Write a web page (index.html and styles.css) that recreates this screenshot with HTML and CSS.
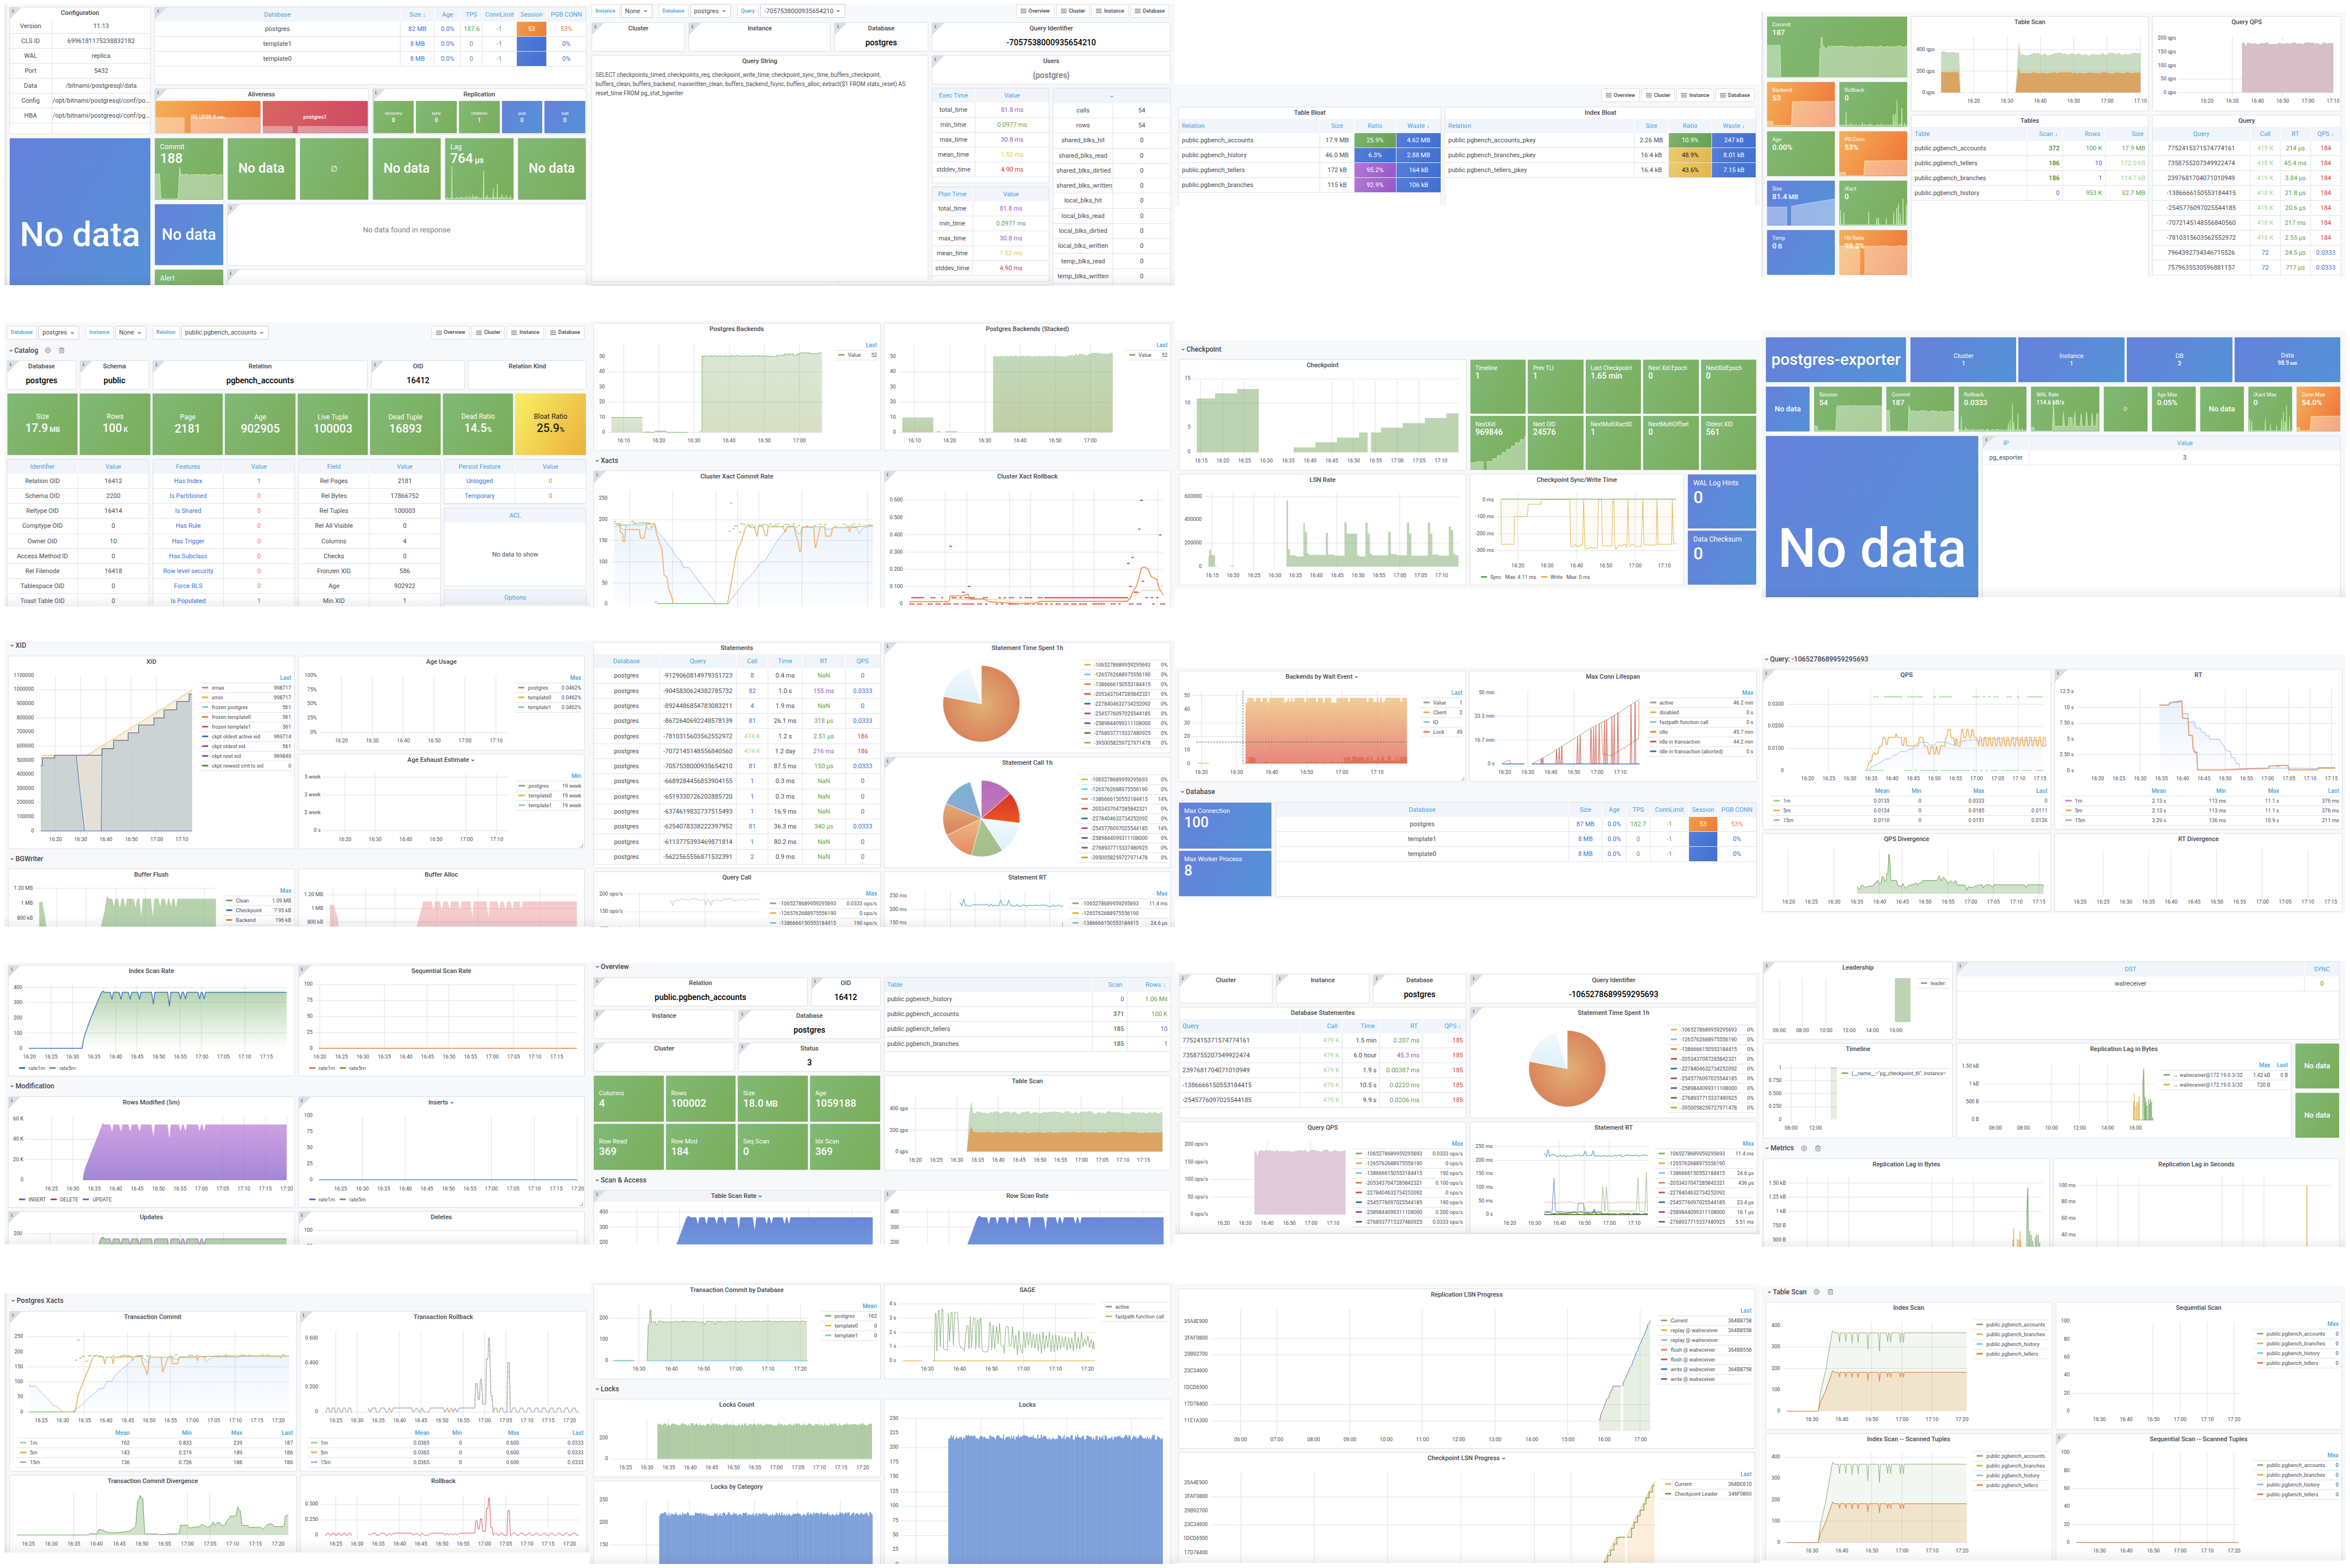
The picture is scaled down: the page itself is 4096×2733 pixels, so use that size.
FILE: index.html
```html
<!DOCTYPE html>
<html lang="en">
<head>
<meta charset="utf-8">
<title>PostgreSQL dashboards</title>
<link rel="stylesheet" href="styles.css">
</head>
<body>
<svg class="defs" aria-hidden="true">
<symbol id="chev" viewBox="0 0 10 10"><path d="M2 3.5 5 6.5 8 3.5" fill="none" stroke="currentColor" stroke-width="1.5"/></symbol>
<symbol id="menu" viewBox="0 0 10 10"><path d="M0 2H10M0 5H10M0 8H10" fill="none" stroke="currentColor" stroke-width="1.1"/></symbol>
<symbol id="gear" viewBox="0 0 16 16"><path d="M6.6 1.5h2.8l.5 1.9 1.8-1 2 2-1 1.8 1.8.5v2.6l-1.8.5 1 1.8-2 2-1.8-1-.5 1.9H6.6l-.5-1.9-1.8 1-2-2 1-1.8-1.8-.5V6.7l1.8-.5-1-1.8 2-2 1.8 1z" fill="none" stroke="currentColor" stroke-width="1.3"/><circle cx="8" cy="8" r="2.3" fill="none" stroke="currentColor" stroke-width="1.3"/></symbol>
<symbol id="trash" viewBox="0 0 16 16"><path d="M1.5 4H14.5M5.5 4V1.7H10.5V4M3 4V14.5H13V4M6.5 7V11.5M9.5 7V11.5" fill="none" stroke="currentColor" stroke-width="1.4"/></symbol>
</svg>
<main class="wall">

<section class="shot s11 shade edge"><div class="dash">
<div class="panel w6 h8"><i class="info"></i><h3>Configuration</h3><table class="ct conf"><col class="p30"><col><tr><td>Version<td>11.13<tr><td>CLS ID<td>6996181175238832182<tr><td>WAL<td>replica<tr><td>Port<td>5432<tr><td>Data<td>/bitnami/postgresql/data<tr><td>Config<td>/opt/bitnami/postgresql/conf/po…<tr><td>HBA<td>/opt/bitnami/postgresql/conf/pg…<tr><td>&nbsp;<td>&nbsp;</table></div>
<div class="panel w18 h5"><i class="info"></i><table class="ct"><col class="p57"><col class="p8"><col class="p6"><col class="p5"><col class="p8"><col class="p7"><col class="p9"><tr><th>Database<th>Size ↓<th>Age<th>TPS<th>ConnLimit<th>Session<th>PGB CONN<tr><td>postgres<td class="b">82 MB<td class="b">0.0%<td class="g">187.6<td class="g">-1<td class="co">53<td class="o">53%<tr><td>template1<td class="b">8 MB<td class="b">0.0%<td class="g">0<td class="g">-1<td class="cb"><td class="b">0%<tr><td>template0<td class="b">8 MB<td class="b">0.0%<td class="g">0<td class="g">-1<td class="cb"><td class="b">0%</table></div>
<div class="panel col w9 h3"><i class="info"></i><h3>Aliveness</h3><div class="stats c2"><div class="stat orange mid t9"><svg class="chart" data-chart="al1"></svg><p class="line">PG UP<b>39.6<small> min</small></b></p></div><div class="stat red mid t9"><svg class="chart" data-chart="al2"></svg><p class="line"><b>postgres1</b></p></div></div></div>
<div class="panel col w9 h3"><i class="info"></i><h3>Replication</h3><div class="stats c5"><div class="stat green mid t8"><p>recovery<b>0</b></p></div><div class="stat green mid t8"><p>sync<b>0</b></p></div><div class="stat green mid t8"><p>children<b>1</b></p></div><div class="stat blue mid t8"><p>pub<b>0</b></p></div><div class="stat blue mid t8"><p>sub<b>0</b></p></div></div></div>
<div class="stat blue mid n60 w6 h12"><p><b>No data</b></p></div>
<div class="stat green t12 w3 h4"><svg class="chart" data-chart="cm11"></svg><p>Commit<b>188</b></p></div>
<div class="stat green mid n23 w3 h4"><p><b>No data</b></p></div>
<div class="stat green mid n23 w3 h4"><p><span class="nil">∅</span></p></div>
<div class="stat green mid n23 w3 h4"><p><b>No data</b></p></div>
<div class="stat green t12 w3 h4"><svg class="chart" data-chart="lg11"></svg><p>Lag<b>764<small> µs</small></b></p></div>
<div class="stat green mid n23 w3 h4"><p><b>No data</b></p></div>
<div class="stat blue mid n27 w3 h4"><p><b>No data</b></p></div>
<div class="panel w15 h4"><i class="info"></i><p class="empty">No data found in response</p></div>
<div class="stat green t12 w3 h4"><p>Alert</p></div>
<div class="panel w15 h4"><i class="info"></i></div>
</div></section>

<section class="shot s12 shade">
<nav class="bar"><label for="i12">Instance</label><select id="i12"><option>None</option></select><label for="d12">Database</label><select id="d12"><option>postgres</option></select><label for="q12">Query</label><select id="q12"><option>-7057538000935654210</option></select><span class="push"></span><a href="#"><svg><use href="#menu"/></svg>Overview</a><a href="#"><svg><use href="#menu"/></svg>Cluster</a><a href="#"><svg><use href="#menu"/></svg>Instance</a><a href="#"><svg><use href="#menu"/></svg>Database</a></nav>
<div class="dash">
<div class="panel w4 h2"><i class="info"></i><h3>Cluster</h3></div>
<div class="panel w6 h2"><i class="info"></i><h3>Instance</h3></div>
<div class="panel w4 h2"><i class="info"></i><h3>Database</h3><p class="val">postgres</p></div>
<div class="panel w10 h2"><i class="info"></i><h3>Query Identifier</h3><p class="val">-7057538000935654210</p></div>
<div class="panel w14 h14"><h3>Query String</h3><p class="sql">SELECT checkpoints_timed, checkpoints_req, checkpoint_write_time, checkpoint_sync_time, buffers_checkpoint,<br>buffers_clean, buffers_backend, maxwritten_clean, buffers_backend_fsync, buffers_alloc, extract($1 FROM stats_reset) AS<br>reset_time FROM pg_stat_bgwriter</p></div>
<div class="panel w10 h2"><i class="info"></i><h3>Users</h3><p class="val dim">{postgres}</p></div>
<div class="panel w5 h6"><table class="ct"><col class="p37"><col><tr><th>Exec Time<th>Value<tr><td>total_time<td class="p">81.8 ms<tr><td>min_time<td class="g">0.0977 ms<tr><td>max_time<td class="p">30.8 ms<tr><td>mean_time<td class="y">1.52 ms<tr><td>stddev_time<td class="r">4.90 ms</table></div>
<div class="panel w5 h14"><table class="ct rows14"><col class="p51"><col><tr><th colspan="2"><svg class="ic"><use href="#chev"/></svg><tr><td>calls<td>54<tr><td>rows<td>54<tr><td>shared_blks_hit<td>0<tr><td>shared_blks_read<td>0<tr><td>shared_blks_dirtied<td>0<tr><td>shared_blks_written<td>0<tr><td>local_blks_hit<td>0<tr><td>local_blks_read<td>0<tr><td>local_blks_dirtied<td>0<tr><td>local_blks_written<td>0<tr><td>temp_blks_read<td>0<tr><td>temp_blks_written<td>0<tr><td>&nbsp;<td>&nbsp;</table></div>
<div class="panel w5 h6"><table class="ct"><col class="p35"><col><tr><th>Plan Time<th>Value<tr><td>total_time<td class="p">81.8 ms<tr><td>min_time<td class="g">0.0977 ms<tr><td>max_time<td class="p">30.8 ms<tr><td>mean_time<td class="y">1.52 ms<tr><td>stddev_time<td class="r">4.90 ms</table></div>
<div class="panel w10 h4"><i class="info"></i></div><div class="panel w9 h4"><i class="info"></i></div>
</div></section>

<section class="shot s13">
<nav class="bar"><span class="push"></span><a href="#"><svg><use href="#menu"/></svg>Overview</a><a href="#"><svg><use href="#menu"/></svg>Cluster</a><a href="#"><svg><use href="#menu"/></svg>Instance</a><a href="#"><svg><use href="#menu"/></svg>Database</a></nav>
<div class="dash">
<div class="panel w11 h9"><h3>Table Bloat</h3><table class="rt"><col class="p54"><col class="p13"><col class="p16"><col class="p17"><tr><th>Relation<th class="m">Size<th class="m">Ratio<th class="m">Waste ↓<tr><td>public.pgbench_accounts<td class="m">17.9 MB<td class="m cg">25.9%<td class="m cb">4.62 MB<tr><td>public.pgbench_history<td class="m">46.0 MB<td class="m cb">6.3%<td class="m cb">2.88 MB<tr><td>public.pgbench_tellers<td class="m">172 kB<td class="m cp">95.2%<td class="m cb">164 kB<tr><td>public.pgbench_branches<td class="m">115 kB<td class="m cp">92.9%<td class="m cb">106 kB</table></div>
<div class="panel w13 h9"><h3>Index Bloat</h3><table class="rt"><col class="p61"><col class="p11"><col class="p14"><col class="p14"><tr><th>Relation<th class="m">Size<th class="m">Ratio<th class="m">Waste ↓<tr><td>public.pgbench_accounts_pkey<td class="m">2.26 MB<td class="m cg">10.9%<td class="m cb">247 kB<tr><td>public.pgbench_branches_pkey<td class="m">16.4 kB<td class="m cy">48.9%<td class="m cb">8.01 kB<tr><td>public.pgbench_tellers_pkey<td class="m">16.4 kB<td class="m cy">43.6%<td class="m cb">7.15 kB</table></div>
</div></section>

<section class="shot s14 edge"><div class="dash">
<div class="stat green t9 w6 h4"><svg class="chart" data-chart="cm14"></svg><p>Commit<b>187</b></p></div>
<div class="panel plot w10 h6"><h3>Table Scan</h3><svg class="chart" data-chart="ts14"></svg></div>
<div class="panel plot w8 h6"><h3>Query QPS</h3><svg class="chart" data-chart="qq14"></svg></div>
<div class="stat orange t9 w3 h3"><svg class="chart" data-chart="bk14"></svg><p>Backend<b>53</b></p></div>
<div class="stat green t9 w3 h3"><svg class="chart" data-chart="rb14"></svg><p>Rollback<b>0</b></p></div>
<div class="panel w10 h12"><h3>Tables</h3><table class="rt"><col class="p49"><col class="p15"><col class="p18"><col class="p18"><tr><th>Table<th>Scan ↓<th>Rows<th>Size<tr><td>public.pgbench_accounts<td class="G">372<td class="g">100 K<td class="g">17.9 MB<tr><td>public.pgbench_tellers<td class="G">186<td class="b">10<td class="l">172.0 kB<tr><td>public.pgbench_branches<td class="G">186<td class="b">1<td class="l">114.7 kB<tr><td>public.pgbench_history<td class="b">0<td class="g">953 K<td class="g">52.7 MB</table></div>
<div class="panel w8 h12"><h3>Query</h3><table class="ct"><col class="p52"><col class="p16"><col class="p16"><col class="p16"><tr><th>Query<th>Call<th>RT<th>QPS ↓<tr><td>7752415371574774161<td class="l">419 K<td class="g">214 µs<td class="r">184<tr><td>7358755207349922474<td class="l">418 K<td class="g">45.4 ms<td class="r">184<tr><td>2397681704071010949<td class="l">419 K<td class="g">3.84 µs<td class="r">184<tr><td>-1386666150553184415<td class="l">418 K<td class="g">21.8 µs<td class="r">184<tr><td>-2545776097025544185<td class="l">419 K<td class="g">20.6 µs<td class="r">184<tr><td>-7072145148556840560<td class="l">418 K<td class="g">217 ms<td class="r">184<tr><td>-7810315603562552972<td class="l">418 K<td class="g">2.55 µs<td class="r">184<tr><td>7964392734346715526<td class="b">72<td class="g">24.5 µs<td class="b">0.0333<tr><td>7579635530596881157<td class="b">72<td class="g">717 µs<td class="b">0.0333<tr><td>&nbsp;<td>&nbsp;<td>&nbsp;<td>&nbsp;</table></div>
<div class="stat green t9 w3 h3"><p>Age<b>0.00%</b></p></div>
<div class="stat orange t9 w3 h3"><svg class="chart" data-chart="pc14"></svg><p>PG Conn<b>53%</b></p></div>
<div class="stat blue t9 w3 h3"><svg class="chart" data-chart="sz14"></svg><p>Size<b>81.4<small> MB</small></b></p></div>
<div class="stat green t9 w3 h3"><svg class="chart" data-chart="ix14"></svg><p>iXact<b>0</b></p></div>
<div class="stat blue t9 w3 h3"><p>Temp<b>0<small> B</small></b></p></div>
<div class="stat orange t9 w3 h3"><svg class="chart" data-chart="hr14"></svg><p>Hit Ratio<b>98.2%</b></p></div>
</div></section>

<section class="shot s21 shade">
<nav class="bar"><label for="d21">Database</label><select id="d21"><option>postgres</option></select><label for="i21">Instance</label><select id="i21"><option>None</option></select><label for="r21">Relation</label><select id="r21"><option>public.pgbench_accounts</option></select><span class="push"></span><a href="#"><svg><use href="#menu"/></svg>Overview</a><a href="#"><svg><use href="#menu"/></svg>Cluster</a><a href="#"><svg><use href="#menu"/></svg>Instance</a><a href="#"><svg><use href="#menu"/></svg>Database</a></nav>
<div class="dash">
<h2 class="w24 h1"><button><svg class="ic"><use href="#chev"/></svg>Catalog</button><svg class="tool"><use href="#gear"/></svg><svg class="tool"><use href="#trash"/></svg></h2>
<div class="panel w3 h2"><i class="info"></i><h3>Database</h3><p class="val">postgres</p></div>
<div class="panel w3 h2"><i class="info"></i><h3>Schema</h3><p class="val">public</p></div>
<div class="panel w9 h2"><i class="info"></i><h3>Relation</h3><p class="val">pgbench_accounts</p></div>
<div class="panel w4 h2"><i class="info"></i><h3>OID</h3><p class="val">16412</p></div>
<div class="panel w5 h2"><h3>Relation Kind</h3></div>
<div class="stats c8 w24 h4"><div class="stat green mid t20"><p>Size<b>17.9<small> MB</small></b></p></div><div class="stat green mid t20"><p>Rows<b>100<small> K</small></b></p></div><div class="stat green mid t20"><p>Page<b>2181</b></p></div><div class="stat green mid t20"><p>Age<b>902905</b></p></div><div class="stat green mid t20"><p>Live Tuple<b>100003</b></p></div><div class="stat green mid t20"><p>Dead Tuple<b>16893</b></p></div><div class="stat green mid t20"><p>Dead Ratio<b>14.5<small>%</small></b></p></div><div class="stat yellow mid t20"><p>Bloat Ratio<b>25.9<small>%</small></b></p></div></div>
<div class="panel w6 h12"><table class="ct rows11"><col><col><tr><th>Identifier<th>Value<tr><td>Relation OID<td>16412<tr><td>Schema OID<td>2200<tr><td>Reltype OID<td>16414<tr><td>Comptype OID<td>0<tr><td>Owner OID<td>10<tr><td>Access Method ID<td>0<tr><td>Rel Filenode<td>16418<tr><td>Tablespace OID<td>0<tr><td>Toast Table OID<td>0<tr><td>&nbsp;<td></table></div>
<div class="panel w6 h12"><table class="ct rows11"><col><col><tr><th>Features<th>Value<tr><td class="b">Has Index<td class="g">1<tr><td class="b">Is Partitioned<td class="o">0<tr><td class="b">Is Shared<td class="o">0<tr><td class="b">Has Rule<td class="o">0<tr><td class="b">Has Trigger<td class="o">0<tr><td class="b">Has Subclass<td class="o">0<tr><td class="b">Row level security<td class="o">0<tr><td class="b">Force RLS<td class="o">0<tr><td class="b">Is Populated<td class="g">1<tr><td>&nbsp;<td></table></div>
<div class="panel w6 h12"><table class="ct rows11"><col><col><tr><th>Field<th>Value<tr><td>Rel Pages<td>2181<tr><td>Rel Bytes<td>17866752<tr><td>Rel Tuples<td>100003<tr><td>Rel All Visible<td>0<tr><td>Columns<td>4<tr><td>Checks<td>0<tr><td>Fronzen XID<td>586<tr><td>Age<td>902922<tr><td>Min XID<td>1<tr><td>&nbsp;<td></table></div>
<div class="panel w6 h3"><table class="ct"><col><col><tr><th>Persist Feature<th>Value<tr><td class="b">Unlogged<td class="o">0<tr><td class="b">Temporary<td class="o">0</table></div>
<div class="panel col w6 h5"><table class="ct"><tr><th>ACL</table><p class="empty dark">No data to show</p></div>
<div class="panel w6 h4"><table class="ct"><tr><th>Options</table></div>
</div></section>

<section class="shot s22"><div class="dash">
<div class="panel plot w12 h8"><h3>Postgres Backends</h3><svg class="chart" data-chart="bk1"></svg><table class="legend"><tr><th><th>Last<tr class="k1"><td>Value<td>52</table></div>
<div class="panel plot w12 h8"><h3>Postgres Backends (Stacked)</h3><svg class="chart" data-chart="bk2"></svg><table class="legend"><tr><th><th>Last<tr class="k1"><td>Value<td>52</table></div>
<h2 class="w24 h1"><button><svg class="ic"><use href="#chev"/></svg>Xacts</button></h2>
<div class="panel plot w12 h9"><i class="info"></i><h3>Cluster Xact Commit Rate</h3><svg class="chart" data-chart="cm22"></svg></div>
<div class="panel plot w12 h9"><i class="info"></i><h3>Cluster Xact Rollback</h3><svg class="chart" data-chart="rb22"></svg></div>
</div></section>

<section class="shot s23"><div class="dash">
<h2 class="w24 h1"><button><svg class="ic"><use href="#chev"/></svg>Checkpoint</button></h2>
<div class="panel plot w12 h7"><h3>Checkpoint</h3><svg class="chart" data-chart="ck23"></svg></div>
<div class="stats c5 w12 h7"><div class="stat green t10"><p>Timeline<b>1</b></p></div><div class="stat green t10"><p>Prev TLI<b>1</b></p></div><div class="stat green t10"><p>Last Checkpoint<b>1.65 min</b></p></div><div class="stat green t10"><p>Next Xid Epoch<b>0</b></p></div><div class="stat green t10"><p>NextXidEpoch<b>0</b></p></div><div class="stat green t10"><svg class="chart" data-chart="nx23"></svg><p>NextXid<b>969846</b></p></div><div class="stat green t10"><p>Next OID<b>24576</b></p></div><div class="stat green t10"><p>NextMultiXactID<b>1</b></p></div><div class="stat green t10"><p>NextMultiOffset<b>0</b></p></div><div class="stat green t10"><p>Oldest XID<b>561</b></p></div></div>
<div class="panel plot w12 h7"><h3>LSN Rate</h3><svg class="chart" data-chart="ls23"></svg></div>
<div class="panel plot w9 h7"><h3>Checkpoint Sync/Write Time</h3><svg class="chart" data-chart="sw23"></svg><ul class="keys"><li class="k11">Sync&ensp; Max: 4.11 ms<li class="k2">Write&ensp; Max: 0 ms</ul></div>
<div class="stats c1 w3 h7"><div class="stat blue t30"><p>WAL Log Hints<b>0</b></p></div><div class="stat blue t30"><p>Data Checksum<b>0</b></p></div></div>
</div></section>

<section class="shot s24 shade"><div class="dash">
<div class="stat blue mid n28 w6 h3"><p><b>postgres-exporter</b></p></div>
<div class="stats c4 w18 h3"><div class="stat blue mid t11"><p>Cluster<b>1</b></p></div><div class="stat blue mid t11"><p>Instance<b>1</b></p></div><div class="stat blue mid t11"><p>DB<b>3</b></p></div><div class="stat blue mid t11"><p>Data<b>98.9<small> MB</small></b></p></div></div>
<div class="stat blue mid n13 w2 h3"><p><b>No data</b></p></div>
<div class="stat green t9 w3 h3"><svg class="chart" data-chart="ss24"></svg><p>Session<b>54</b></p></div>
<div class="stat green t9 w3 h3"><svg class="chart" data-chart="cm24"></svg><p>Commit<b>187</b></p></div>
<div class="stat green t9 w3 h3"><svg class="chart" data-chart="rb24"></svg><p>Rollback<b>0.0333</b></p></div>
<div class="stat green t9 w3 h3"><svg class="chart" data-chart="wr24"></svg><p>WAL Rate<b class="sm">114.6 kB/s</b></p></div>
<div class="stat green mid n13 w2 h3"><p><span class="nil">∅</span></p></div>
<div class="stat green t9 w2 h3"><p>Age Max<b>0.05%</b></p></div>
<div class="stat green mid n13 w2 h3"><p><b>No data</b></p></div>
<div class="stat green t9 w2 h3"><svg class="chart" data-chart="ix24"></svg><p>iXact Max<b>0</b></p></div>
<div class="stat orange t9 w2 h3"><svg class="chart" data-chart="cx24"></svg><p>Conn Max<b>54.0%</b></p></div>
<div class="stat blue mid n94 w9 h14"><p><b>No data</b></p></div>
<div class="panel w15 h14"><i class="info"></i><table class="ct"><col class="p13"><col><tr><th>IP<th>Value<tr><td>pg_exporter<td>3</table></div>
</div></section>

<section class="shot s31 shade"><div class="dash">
<h2 class="w24 h1"><button><svg class="ic"><use href="#chev"/></svg>XID</button></h2>
<div class="panel plot w12 h12"><h3>XID</h3><svg class="chart" data-chart="xid"></svg><table class="legend"><tr><th><th>Last<tr class="k1"><td>xmax<td>998717<tr class="k2"><td>xmin<td>998717<tr class="k3"><td>frozen postgres<td>561<tr class="k4"><td>frozen template0<td>561<tr class="k5"><td>frozen template1<td>561<tr class="k6"><td>ckpt oldest active xid<td>969714<tr class="k7"><td>ckpt oldest xid<td>561<tr class="k8"><td>ckpt next xid<td>969846<tr class="k9"><td>ckpt newest cmt ts xid<td>0</table></div>
<div class="panel plot w12 h6"><h3>Age Usage</h3><svg class="chart" data-chart="au31"></svg><table class="legend"><tr><th><th>Max<tr class="k1"><td>postgres<td>0.0462%<tr class="k2"><td>template0<td>0.0462%<tr class="k3"><td>template1<td>0.0462%</table></div>
<div class="panel plot grip w12 h6"><h3>Age Exhaust Estimate <svg class="ic"><use href="#chev"/></svg></h3><svg class="chart" data-chart="ae31"></svg><table class="legend"><tr><th><th>Min<tr class="k1"><td>postgres<td>19 week<tr class="k2"><td>template0<td>19 week<tr class="k3"><td>template1<td>19 week</table></div>
<h2 class="w24 h1"><button><svg class="ic"><use href="#chev"/></svg>BGWriter</button></h2>
<div class="panel plot w12 h7"><h3>Buffer Flush</h3><svg class="chart" data-chart="bf31"></svg><table class="legend"><tr><th><th>Max<tr class="k11"><td>Clean<td>1.09 MB<tr class="k12"><td>Checkpoint<td>7.95 kB<tr class="k13"><td>Backend<td>196 kB<tr><td>&nbsp;<td></table></div>
<div class="panel plot w12 h7"><h3>Buffer Alloc</h3><svg class="chart" data-chart="ba31"></svg></div>
</div></section>

<section class="shot s32 shade"><div class="dash">
<div class="panel w12 h14"><h3>Statements</h3><table class="ct rows14"><col class="p23"><col class="p27"><col class="p11"><col class="p12"><col class="p15"><col class="p12"><tr><th>Database<th>Query<th>Call<th>Time<th>RT<th>QPS<tr><td>postgres<td>-9129060814979351723<td class="b">8<td>0.4 ms<td class="g">NaN<td class="b">0<tr><td>postgres<td>-9045830624382785732<td class="b">82<td>1.0 s<td class="p">155 ms<td class="b">0.0333<tr><td>postgres<td>-8924486854783083211<td class="b">4<td>1.9 ms<td class="g">NaN<td class="b">0<tr><td>postgres<td>-8672640692248578139<td class="b">81<td>26.1 ms<td class="g">318 µs<td class="b">0.0333<tr><td>postgres<td>-7810315603562552972<td class="l">474 K<td>1.2 s<td class="g">2.51 µs<td class="r">186<tr><td>postgres<td>-7072145148556840560<td class="l">474 K<td>1.2 day<td class="p">216 ms<td class="r">186<tr><td>postgres<td>-7057538000935654210<td class="b">81<td>87.5 ms<td class="g">150 µs<td class="b">0.0333<tr><td>postgres<td>-6689284456853904155<td class="b">1<td>0.3 ms<td class="g">NaN<td class="b">0<tr><td>postgres<td>-6519330726202885720<td class="b">1<td>0.3 ms<td class="g">NaN<td class="b">0<tr><td>postgres<td>-6374619832737515493<td class="b">1<td>16.9 ms<td class="g">NaN<td class="b">0<tr><td>postgres<td>-6254078338222397952<td class="b">81<td>36.3 ms<td class="g">340 µs<td class="b">0.0333<tr><td>postgres<td>-6113775393469871814<td class="b">1<td>80.2 ms<td class="g">NaN<td class="b">0<tr><td>postgres<td>-5622565556871532391<td class="b">2<td>0.9 ms<td class="g">NaN<td class="b">0</table></div>
<div class="panel plot w12 h7"><i class="info"></i><h3>Statement Time Spent 1h</h3><svg class="chart" data-chart="pie1"></svg><table class="legend"><tr class="k2"><td>-1065278689959295693<td>0%<tr class="k3"><td>-1265762688975556190<td>0%<tr class="k4"><td>-1386666150553184415<td>0%<tr class="k5"><td>-2053437047285842321<td>0%<tr class="k6"><td>-2278404632734252092<td>0%<tr class="k7"><td>-2545776097025544185<td>0%<tr class="k8"><td>-2589844099311108000<td>0%<tr class="k9"><td>-2768937715337480925<td>0%<tr class="k10"><td>-3950058259727971478<td>0%</table></div>
<div class="panel plot w12 h7"><i class="info"></i><h3>Statement Call 1h</h3><svg class="chart" data-chart="pie2"></svg><table class="legend"><tr class="k2"><td>-1065278689959295693<td>0%<tr class="k3"><td>-1265762688975556190<td>0%<tr class="k4"><td>-1386666150553184415<td>14%<tr class="k5"><td>-2053437047285842321<td>0%<tr class="k6"><td>-2278404632734252092<td>0%<tr class="k7"><td>-2545776097025544185<td>14%<tr class="k8"><td>-2589844099311108000<td>0%<tr class="k9"><td>-2768937715337480925<td>0%<tr class="k10"><td>-3950058259727971478<td>0%</table></div>
<div class="panel plot w12 h7"><h3>Query Call</h3><svg class="chart" data-chart="qc32"></svg><table class="legend"><tr><th><th>Max<tr class="k1"><td>-1065278689959295693<td>0.0333 ops/s<tr class="k2"><td>-1265762688975556190<td>0 ops/s<tr class="k3"><td>-1386666150553184415<td>190 ops/s<tr class="k4"><td>&nbsp;<td></table></div>
<div class="panel plot w12 h7"><h3>Statement RT</h3><svg class="chart" data-chart="rt32"></svg><table class="legend"><tr><th><th>Max<tr class="k1"><td>-1065278689959295693<td>11.4 ms<tr class="k2"><td>-1265762688975556190<td><tr class="k3"><td>-1386666150553184415<td>24.6 µs<tr class="k4"><td>&nbsp;<td></table></div>
</div></section>

<section class="shot s33"><div class="dash">
<div class="panel plot grip w12 h7"><h3>Backends by Wait Event <svg class="ic"><use href="#chev"/></svg></h3><svg class="chart" data-chart="bw33"></svg><table class="legend"><tr><th><th>Last<tr class="k1"><td>Value<td>1<tr class="k2"><td>Client<td>2<tr class="k3"><td>IO<td><tr class="k4"><td>Lock<td>49</table></div>
<div class="panel plot w12 h7"><h3>Max Conn Lifespan</h3><svg class="chart" data-chart="ml33"></svg><table class="legend"><tr><th><th>Max<tr class="k1"><td>active<td>46.2 min<tr class="k2"><td>disabled<td>0 s<tr class="k3"><td>fastpath function call<td>0 s<tr class="k4"><td>idle<td>45.7 min<tr class="k5"><td>idle in transaction<td>44.2 min<tr class="k6"><td>idle in transaction (aborted)<td>0 s</table></div>
<h2 class="w24 h1"><button><svg class="ic"><use href="#chev"/></svg>Database</button></h2>
<div class="stats c1 w4 h6"><div class="stat blue t25"><p>Max Connection<b>100</b></p></div><div class="stat blue t25"><p>Max Worker Process<b>8</b></p></div></div>
<div class="panel w20 h6"><table class="ct"><col class="p61"><col class="p7"><col class="p5"><col class="p5"><col class="p8"><col class="p6"><col class="p8"><tr><th>Database<th>Size<th>Age<th>TPS<th>ConnLimit<th>Session<th>PGB CONN<tr><td>postgres<td class="b">87 MB<td class="b">0.0%<td class="g">182.7<td class="g">-1<td class="co">53<td class="o">53%<tr><td>template1<td class="b">8 MB<td class="b">0.0%<td class="g">0<td class="g">-1<td class="cb"><td class="b">0%<tr><td>template0<td class="b">8 MB<td class="b">0.0%<td class="g">0<td class="g">-1<td class="cb"><td class="b">0%</table></div>
</div></section>

<section class="shot s34"><div class="dash">
<h2 class="w24 h1"><button><svg class="ic"><use href="#chev"/></svg>Query: -1065278689959295693</button></h2>
<div class="panel plot w12 h10"><i class="info"></i><h3>QPS</h3><svg class="chart" data-chart="qp34"></svg><table class="legend wide"><tr><th><th>Mean<th>Min<th>Max<th>Last<tr class="k14"><td>1m<td>0.0135<td>0<td>0.0333<td>0<tr class="k15"><td>5m<td>0.0124<td>0<td>0.0185<td>0.0111<tr class="k16"><td>15m<td>0.0110<td>0<td>0.0151<td>0.0126</table></div>
<div class="panel plot w12 h10"><i class="info"></i><h3>RT</h3><svg class="chart" data-chart="rt34"></svg><table class="legend wide"><tr><th><th>Mean<th>Min<th>Max<th>Last<tr class="k17"><td>1m<td>2.13 s<td>113 ms<td>11.1 s<td>376 ms<tr class="k15"><td>5m<td>2.13 s<td>113 ms<td>11.1 s<td>376 ms<tr class="k16"><td>15m<td>3.29 s<td>136 ms<td>10.9 s<td>211 ms</table></div>
<div class="panel plot w12 h5"><h3>QPS Divergence</h3><svg class="chart" data-chart="qd34"></svg></div>
<div class="panel plot w12 h5"><h3>RT Divergence</h3><svg class="chart" data-chart="rd34"></svg></div>
</div></section>

<section class="shot s41 shade"><div class="dash">
<div class="panel plot w12 h7"><i class="info"></i><h3>Index Scan Rate</h3><svg class="chart" data-chart="ir41"></svg><ul class="keys"><li class="k12">rate1m<li class="k11">rate5m</ul></div>
<div class="panel plot w12 h7"><i class="info"></i><h3>Sequential Scan Rate</h3><svg class="chart" data-chart="sr41"></svg><ul class="keys"><li class="k13">rate1m<li class="k11">rate5m</ul></div>
<h2 class="w24 h1"><button><svg class="ic"><use href="#chev"/></svg>Modification</button></h2>
<div class="panel plot w12 h7"><i class="info"></i><h3>Rows Modified (5m)</h3><svg class="chart" data-chart="rm41"></svg><ul class="keys"><li class="k12">INSERT<li class="k18">DELETE<li class="k19">UPDATE</ul></div>
<div class="panel plot grip w12 h7"><i class="info"></i><h3>Inserts <svg class="ic"><use href="#chev"/></svg></h3><svg class="chart" data-chart="in41"></svg><ul class="keys"><li class="k12">rate1m<li class="k11">rate5m</ul></div>
<div class="panel plot w12 h7"><i class="info"></i><h3>Updates</h3><svg class="chart" data-chart="up41"></svg></div>
<div class="panel plot w12 h7"><i class="info"></i><h3>Deletes</h3><svg class="chart" data-chart="de41"></svg></div>
</div></section>

<section class="shot s42"><div class="dash">
<h2 class="w24 h1"><button><svg class="ic"><use href="#chev"/></svg>Overview</button></h2>
<div class="panel w9 h2"><i class="info"></i><h3>Relation</h3><p class="val">public.pgbench_accounts</p></div>
<div class="panel w3 h2"><i class="info"></i><h3>OID</h3><p class="val">16412</p></div>
<div class="panel w12 h6"><table class="rt"><col class="p73"><col class="p12"><col class="p15"><tr><th>Table<th>Scan<th>Rows ↓<tr><td>public.pgbench_history<td class="b">0<td class="g">1.06 Mil<tr><td>public.pgbench_accounts<td class="G">371<td class="g">100 K<tr><td>public.pgbench_tellers<td class="G">185<td class="b">10<tr><td>public.pgbench_branches<td class="G">185<td class="b">1</table></div>
<div class="panel w6 h2"><i class="info"></i><h3>Instance</h3></div>
<div class="panel w6 h2"><i class="info"></i><h3>Database</h3><p class="val">postgres</p></div>
<div class="panel w6 h2"><i class="info"></i><h3>Cluster</h3></div>
<div class="panel w6 h2"><i class="info"></i><h3>Status</h3><p class="val">3</p></div>
<div class="stats c4 w12 h6"><div class="stat green vmid t18"><p>Columns<b>4</b></p></div><div class="stat green vmid t18"><p>Rows<b>100002</b></p></div><div class="stat green vmid t18"><p>Size<b>18.0<small> MB</small></b></p></div><div class="stat green vmid t18"><p>Age<b>1059188</b></p></div><div class="stat green vmid t18"><p>Row Read<b>369</b></p></div><div class="stat green vmid t18"><p>Row Mod<b>184</b></p></div><div class="stat green vmid t18"><p>Seq Scan<b>0</b></p></div><div class="stat green vmid t18"><p>Idx Scan<b>369</b></p></div></div>
<div class="panel plot w12 h6"><h3>Table Scan</h3><svg class="chart" data-chart="ts42"></svg></div>
<h2 class="w24 h1"><button><svg class="ic"><use href="#chev"/></svg>Scan &amp; Access</button></h2>
<div class="panel plot w12 h7"><i class="info"></i><h3 class="hot">Table Scan Rate <svg class="ic"><use href="#chev"/></svg></h3><svg class="chart" data-chart="tr42"></svg></div>
<div class="panel plot w12 h7"><i class="info"></i><h3>Row Scan Rate</h3><svg class="chart" data-chart="rr42"></svg></div>
</div></section>

<section class="shot s43 shade"><div class="dash">
<div class="panel w4 h2"><i class="info"></i><h3>Cluster</h3></div>
<div class="panel w4 h2"><i class="info"></i><h3>Instance</h3></div>
<div class="panel w4 h2"><i class="info"></i><h3>Database</h3><p class="val">postgres</p></div>
<div class="panel w12 h2"><i class="info"></i><h3>Query Identifier</h3><p class="val">-1065278689959295693</p></div>
<div class="panel w12 h7"><h3>Database Statementes</h3><table class="rt"><col class="p42"><col class="p15"><col class="p13"><col class="p15"><col class="p15"><tr><th>Query<th>Call<th>Time<th>RT<th>QPS ↓<tr><td>7752415371574774161<td class="l">479 K<td>1.5 min<td class="g">0.207 ms<td class="r">185<tr><td>7358755207349922474<td class="l">479 K<td>6.0 hour<td class="p">45.3 ms<td class="r">185<tr><td>2397681704071010949<td class="l">479 K<td>1.9 s<td class="g">0.00387 ms<td class="r">185<tr><td>-1386666150553184415<td class="l">479 K<td>10.5 s<td class="g">0.0220 ms<td class="r">185<tr><td>-2545776097025544185<td class="l">479 K<td>9.9 s<td class="g">0.0206 ms<td class="r">185</table></div>
<div class="panel plot w12 h7"><i class="info"></i><h3>Statement Time Spent 1h</h3><svg class="chart" data-chart="pie1"></svg><table class="legend"><tr class="k2"><td>-1065278689959295693<td>0%<tr class="k3"><td>-1265762688975556190<td>0%<tr class="k4"><td>-1386666150553184415<td>0%<tr class="k5"><td>-2053437047285842321<td>0%<tr class="k6"><td>-2278404632734252092<td>0%<tr class="k7"><td>-2545776097025544185<td>0%<tr class="k8"><td>-2589844099311108000<td>0%<tr class="k9"><td>-2768937715337480925<td>0%<tr class="k10"><td>-3950058259727971478<td>0%</table></div>
<div class="panel plot w12 h7"><h3>Query QPS</h3><svg class="chart" data-chart="qq43"></svg><table class="legend"><tr><th><th>Max<tr class="k1"><td>-1065278689959295693<td>0.0333 ops/s<tr class="k2"><td>-1265762688975556190<td>0 ops/s<tr class="k3"><td>-1386666150553184415<td>190 ops/s<tr class="k4"><td>-2053437047285842321<td>0.100 ops/s<tr class="k5"><td>-2278404632734252092<td>0 ops/s<tr class="k6"><td>-2545776097025544185<td>190 ops/s<tr class="k7"><td>-2589844099311108000<td>0.200 ops/s<tr class="k8"><td>-2768937715337480925<td>0.0333 ops/s</table></div>
<div class="panel plot w12 h7"><h3>Statement RT</h3><svg class="chart" data-chart="rt43"></svg><table class="legend"><tr><th><th>Max<tr class="k1"><td>-1065278689959295693<td>11.4 ms<tr class="k2"><td>-1265762688975556190<td><tr class="k3"><td>-1386666150553184415<td>24.6 µs<tr class="k4"><td>-2053437047285842321<td>436 µs<tr class="k5"><td>-2278404632734252092<td><tr class="k6"><td>-2545776097025544185<td>23.4 µs<tr class="k7"><td>-2589844099311108000<td>16.1 µs<tr class="k8"><td>-2768937715337480925<td>5.51 ms</table></div>
</div></section>

<section class="shot s44 shade"><div class="dash">
<div class="panel plot w8 h5"><i class="info"></i><h3>Leadership</h3><svg class="chart" data-chart="ld44"></svg><table class="legend low"><tr class="k1"><td>leader:<td></table></div>
<div class="panel w16 h5"><i class="info"></i><table class="ct"><col class="p91"><col class="p9"><tr><th>DST<th>SYNC<tr><td>walreceiver<td class="g">0</table></div>
<div class="panel plot w8 h6"><h3>Timeline</h3><svg class="chart" data-chart="tl44"></svg><table class="legend low2"><tr class="k1"><td>{__name__="pg_checkpoint_tli", instance=<td></table></div>
<div class="panel plot w14 h6"><h3>Replication Lag in Bytes</h3><svg class="chart" data-chart="lb44"></svg><table class="legend"><tr><th><th>Max<th>Last<tr class="k1"><td>→ walreceiver@172.19.0.3/32<td>1.42 kB<td>0 B<tr class="k2"><td>→ walreceiver@172.19.0.3/32<td>720 B<td></table></div>
<div class="stat green mid n13 w2 h3"><p><b>No data</b></p></div>
<div class="stat green mid n13 w2 h3"><p><b>No data</b></p></div>
<h2 class="w24 h1"><button><svg class="ic"><use href="#chev"/></svg>Metrics</button><svg class="tool"><use href="#gear"/></svg><svg class="tool"><use href="#trash"/></svg></h2>
<div class="panel plot w12 h7"><h3>Replication Lag in Bytes</h3><svg class="chart" data-chart="l244"></svg></div>
<div class="panel plot w12 h7"><h3>Replication Lag in Seconds</h3><svg class="chart" data-chart="s244"></svg></div>
</div></section>

<section class="shot s51 edge shade"><div class="dash">
<h2 class="w24 h1"><button><svg class="ic"><use href="#chev"/></svg>Postgres Xacts</button></h2>
<div class="panel plot w12 h10"><i class="info"></i><h3>Transaction Commit</h3><svg class="chart" data-chart="tc51"></svg><table class="legend wide"><tr><th><th>Mean<th>Min<th>Max<th>Last<tr class="k14"><td>1m<td>162<td>0.833<td>239<td>187<tr class="k15"><td>5m<td>143<td>0.219<td>189<td>186<tr class="k16"><td>15m<td>136<td>0.726<td>186<td>186</table></div>
<div class="panel plot w12 h10"><i class="info"></i><h3>Transaction Rollback</h3><svg class="chart" data-chart="tr51"></svg><table class="legend wide"><tr><th><th>Mean<th>Min<th>Max<th>Last<tr class="k14"><td>1m<td>0.0365<td>0<td>0.600<td>0.0333<tr class="k15"><td>5m<td>0.0365<td>0<td>0.600<td>0.0333<tr class="k16"><td>15m<td>0.0365<td>0<td>0.600<td>0.0333</table></div>
<div class="panel plot w12 h5"><h3>Transaction Commit Divergence</h3><svg class="chart" data-chart="td51"></svg></div>
<div class="panel plot w12 h5"><h3>Rollback</h3><svg class="chart" data-chart="rb51"></svg></div>
</div></section>

<section class="shot s52 shade"><div class="dash">
<div class="panel plot w12 h6"><h3>Transaction Commit by Database</h3><svg class="chart" data-chart="tc52"></svg><table class="legend"><tr><th><th>Mean<tr class="k1"><td>postgres<td>162<tr class="k2"><td>template0<td>0<tr class="k3"><td>template1<td>0</table></div>
<div class="panel plot w12 h6"><h3>SAGE</h3><svg class="chart" data-chart="sg52"></svg><table class="legend"><tr class="k1"><td>active<td><tr class="k2"><td>fastpath function call<td></table></div>
<h2 class="w24 h1"><button><svg class="ic"><use href="#chev"/></svg>Locks</button></h2>
<div class="panel plot w12 h5"><h3>Locks Count</h3><svg class="chart" data-chart="lc52"></svg></div>
<div class="panel plot w12 h12"><h3>Locks</h3><svg class="chart" data-chart="lk52"></svg></div>
<div class="panel plot w12 h7"><h3>Locks by Category</h3><svg class="chart" data-chart="lt52"></svg></div>
</div></section>

<section class="shot s53 shade"><div class="dash">
<div class="panel plot w24 h10"><h3>Replication LSN Progress</h3><svg class="chart" data-chart="rl53"></svg><table class="legend"><tr><th><th>Last<tr class="k1"><td>Current<td>364B8758<tr class="k2"><td>replay @ walreceiver<td>364B8558<tr class="k3"><td>replay @ walreceiver<td><tr class="k4"><td>flush @ walreceiver<td>364B8558<tr class="k5"><td>flush @ walreceiver<td><tr class="k6"><td>write @ walreceiver<td>364B8758<tr class="k7"><td>write @ walreceiver<td></table></div>
<div class="panel plot w24 h9"><h3>Checkpoint LSN Progress <svg class="ic"><use href="#chev"/></svg></h3><svg class="chart" data-chart="cl53"></svg><table class="legend"><tr><th><th>Last<tr class="k15"><td>Current<td>364BE610<tr class="k11"><td>Checkpoint Leader<td>346F0890</table></div>
</div></section>

<section class="shot s54 shade"><div class="dash">
<h2 class="w24 h1"><button><svg class="ic"><use href="#chev"/></svg>Table Scan</button><svg class="tool"><use href="#gear"/></svg><svg class="tool"><use href="#trash"/></svg></h2>
<div class="panel plot w12 h8"><h3>Index Scan</h3><svg class="chart" data-chart="is54"></svg><table class="legend"><tr class="k1"><td>public.pgbench_accounts<td><tr class="k2"><td>public.pgbench_branches<td><tr class="k3"><td>public.pgbench_history<td><tr class="k4"><td>public.pgbench_tellers<td></table></div>
<div class="panel plot w12 h8"><h3>Sequential Scan</h3><svg class="chart" data-chart="ss54"></svg><table class="legend"><tr><th><th>Max<tr class="k1"><td>public.pgbench_accounts<td>0<tr class="k2"><td>public.pgbench_branches<td>0<tr class="k3"><td>public.pgbench_history<td>0<tr class="k4"><td>public.pgbench_tellers<td>0</table></div>
<div class="panel plot w12 h8"><h3>Index Scan -- Scanned Tuples</h3><svg class="chart" data-chart="it54"></svg><table class="legend"><tr class="k1"><td>public.pgbench_accounts<td><tr class="k2"><td>public.pgbench_branches<td><tr class="k3"><td>public.pgbench_history<td><tr class="k4"><td>public.pgbench_tellers<td></table></div>
<div class="panel plot w12 h8"><i class="info"></i><h3>Sequential Scan -- Scanned Tuples</h3><svg class="chart" data-chart="st54"></svg><table class="legend"><tr><th><th>Max<tr class="k1"><td>public.pgbench_accounts<td>0<tr class="k2"><td>public.pgbench_branches<td>0<tr class="k3"><td>public.pgbench_history<td>0<tr class="k4"><td>public.pgbench_tellers<td>0</table></div>
</div></section>

</main>
<script src="charts.js"></script>
</body>
</html>
```
FILE: styles.css
```css
*{box-sizing:border-box}
body{margin:0;background:#fff;color:#464c54;font:11px/15px Roboto,"Liberation Sans",sans-serif}
.defs{display:none}
h2,h3,p,ul{margin:0;padding:0}

/* wall of dashboards */
.wall{display:grid;grid-template-columns:repeat(4,minmax(0,1fr));grid-auto-rows:500px;row-gap:57px;align-items:center;padding:2px 8px 3px}
.shot{position:relative;overflow:hidden;background:#f7f8fa}
.shade::after{content:"";position:absolute;left:0;right:0;bottom:0;height:20px;background:linear-gradient(transparent,rgba(60,65,75,.08));pointer-events:none}
.edge::before{content:"";position:absolute;left:0;top:0;bottom:0;width:5px;background:linear-gradient(90deg,rgba(60,65,75,.12),transparent)}
.s11{height:489px;padding:4px 6px 0 8px}
.s12{height:492px;padding:1px 7px 0 3px}
.s13{height:212px;padding:8px 7px 0 6px}
.s14{height:462px;padding:7px 7px 0 9px}
.s21{height:495px;padding:6px 6px 0 4px}
.s22{height:500px;padding:4px 7px 0 6px}
.s23{height:433px;padding:5px 6px 0 7px}
.s24{height:464px;padding:10px 8px 0 7px}
.s31{height:498px;padding:0 9px 0 6px}
.s32{height:500px;padding:3px 7px 0 6px}
.s33{height:404px;padding:5px 6px 0 6px}
.s34{height:451px;padding:0 5px 0 2px}
.s41{height:492px;padding:5px 9px 0 6px}
.s42{height:492px;padding:0 7px 0 6px}
.s43{height:456px;padding:3px 5px 0 7px}
.s44{height:499px;padding:2px 10px 0 3px}
.s51{height:452px;padding:2px 5px 0 8px}
.s52{height:492px;padding:4px 7px 0 6px}
.s53{height:487px;padding:9px 9px 0 6px}
.s54{height:479px;padding:0 6px 0 7px}
.s14,.s24,.s34,.s44,.s54{margin-left:2px}
.s31 .dash,.s34 .dash,.s42 .dash{margin-top:-3px}

/* dashboard grid: 24 columns, 24 row units */
.dash{--rows:24;display:grid;grid-template-columns:repeat(24,minmax(0,1fr));grid-template-rows:repeat(var(--rows),minmax(0,1fr));gap:6px;height:calc(var(--rows) * 143px / 5 - 6px)}
.w2{grid-column:span 2}.w3{grid-column:span 3}.w4{grid-column:span 4}.w5{grid-column:span 5}.w6{grid-column:span 6}.w8{grid-column:span 8}.w9{grid-column:span 9}.w10{grid-column:span 10}.w11{grid-column:span 11}.w12{grid-column:span 12}.w13{grid-column:span 13}.w14{grid-column:span 14}.w15{grid-column:span 15}.w16{grid-column:span 16}.w18{grid-column:span 18}.w20{grid-column:span 20}.w24{grid-column:span 24}
.h1{grid-row:span 1}.h2{grid-row:span 2}.h3{grid-row:span 3}.h4{grid-row:span 4}.h5{grid-row:span 5}.h6{grid-row:span 6}.h7{grid-row:span 7}.h8{grid-row:span 8}.h9{grid-row:span 9}.h10{grid-row:span 10}.h12{grid-row:span 12}.h14{grid-row:span 14}

h2{display:flex;align-items:center;padding-left:3px;font-size:12px}
h2 button{display:flex;align-items:center;gap:2px;margin-right:12px;padding:0;border:0;background:none;color:#41464e;font:500 12px/16px Roboto,sans-serif}
.ic{width:8px;height:8px;vertical-align:-1px}
.tool{width:11px;height:11px;margin-right:13px;color:#70767f}
.panel{position:relative;min-width:0;min-height:0;overflow:hidden;background:#fff;border:1px solid #dce0e5;border-radius:2px}
.panel h3{height:20px;color:#41464e;font-weight:500;font-size:11px;line-height:20px;text-align:center}
.panel h3.hot{background:#f1f4f9}
.info{position:absolute;left:0;top:0;width:21px;height:21px;background:linear-gradient(135deg,#dadfe4 50%,transparent 50%)}
.info::before{content:"i";position:absolute;left:4px;top:1px;color:#6d747d;font:bold 8px/11px "DejaVu Serif",serif}
.grip::after{content:"";position:absolute;right:2px;bottom:2px;width:5px;height:5px;border:solid #9aa0a8;border-width:0 1px 1px 0}
.panel.col{display:flex;flex-direction:column}
.val{color:#000;font-weight:500;font-size:14px;line-height:28px;text-align:center}
.val.dim{color:#75797f}
.sql{padding:6px 6px 0;font-size:10px;line-height:16px;white-space:nowrap}
.empty{display:grid;place-content:center;height:90px;color:#7b8087;font-size:13px}
.empty.dark{flex:1;color:#464c54;font-size:11px}

/* toolbar */
.bar{display:flex;align-items:center;height:24px;margin-bottom:8px}
.bar label,.bar a{display:flex;align-items:center;height:24px;padding:0 6px;border:1px solid #dce0e5;border-radius:2px;background:#fff;color:#459fe0;font-weight:500;font-size:9px}
.bar label{margin-right:3px}
.bar select{appearance:none;height:24px;margin:0 11px 0 0;padding:0 19px 0 6px;border:1px solid #c9cfd6;border-radius:2px;color:#464c54;font:11px Roboto,sans-serif;background:#fff url("data:image/svg+xml,%3Csvg xmlns='http://www.w3.org/2000/svg' viewBox='0 0 10 10'%3E%3Cpath d='M2 3.5 5 6.5 8 3.5' fill='none' stroke='%23464c54' stroke-width='1.4'/%3E%3C/svg%3E") no-repeat right 7px center/8px}
.bar a{gap:4px;margin-left:3px;padding:0 7px;color:#41464e;text-decoration:none}
.bar a svg{width:10px;height:10px}
.bar a:last-child{margin-right:3px}
.push{flex:1}

/* data tables */
.ct,.rt{width:100%;border-collapse:separate;border-spacing:0;table-layout:fixed}
.ct th,.rt th{height:25px;padding:0 5px;background:#f1f5fa;border-right:1px solid #fff;color:#479fe0;font-weight:400;text-align:center;white-space:nowrap}
.ct td,.rt td{height:26px;padding:0 5px;border-right:1px solid #e0e3e8;border-bottom:1px solid #e0e3e8;text-align:center;white-space:nowrap}
.ct tr>:last-child,.rt tr>:last-child{border-right:0}
.conf td{padding:0}
.rt th,.rt td{text-align:right}
.rt th:not(:first-child):not(.m){padding-right:8px}
.rt th:first-child,.rt td:first-child{text-align:left}
.rt tr>.m{text-align:center}
.rows11{height:287px}
.rows14{height:367px}
.p5{width:5%}.p6{width:6%}.p7{width:7%}.p8{width:8%}.p9{width:9%}.p11{width:11%}.p12{width:12%}.p13{width:13%}.p14{width:14%}.p15{width:15%}.p16{width:16%}.p17{width:17%}.p18{width:18%}.p23{width:23%}.p27{width:27%}.p30{width:30%}.p35{width:35%}.p37{width:37%}.p42{width:42%}.p49{width:49%}.p51{width:51%}.p52{width:52%}.p54{width:54%}.p57{width:57%}.p61{width:61%}.p73{width:73%}.p91{width:91%}
td.b{color:#3871dc}td.g{color:#5a9f4b}td.G{color:#3c8432;font-weight:500}td.l{color:#a3d494}td.o{color:#ee7c36}td.r{color:#cf3c40}td.p{color:#9457ca}td.y{color:#e6c843}
td.co{background:linear-gradient(120deg,#f29e48,#ee7a36);color:#fff}
td.cb{background:linear-gradient(120deg,#557dda,#3f70d1);color:#fff}
td.cg{background:linear-gradient(120deg,#7bb46a,#67a052);color:#fff}
td.cp{background:linear-gradient(120deg,#b277d6,#9757c8);color:#fff}
td.cy{background:linear-gradient(120deg,#eacd6b,#e1b54f);color:#202226}

/* plots */
.plot,.stat{display:grid;grid-template:minmax(0,1fr)/minmax(0,1fr)}
.plot>h3,.plot>.chart,.plot>.legend,.plot>.keys,.stat>*{grid-area:1/1}
.plot>h3{align-self:start}
.chart{display:block;width:100%;height:100%;min-height:0}
.chart text{fill:#464c54;font-size:9px;dominant-baseline:central}
.legend{align-self:start;justify-self:end;margin:30px 5px 0 0;border-collapse:collapse;font-size:9px;line-height:16px}
.legend th{height:16px;padding:0;color:#459fe0;font-weight:500;font-size:10px;text-align:right}
.legend td{height:17px;padding:0 0 0 18px;border-top:1px solid #dfe2e7;border-bottom:1px solid #dfe2e7;text-align:right;white-space:nowrap}
.legend td:first-child{padding-left:6px;text-align:left}
.legend td:empty{padding-left:6px}
.legend.wide{align-self:end;justify-self:stretch;margin:0 5px 6px 12px}
.legend.low{margin-top:28px}
.legend.low2{margin-top:43px}
.legend td:first-child::before,.keys li::before{content:"";display:inline-block;width:11px;height:3px;margin-right:6px;border-radius:1px;background:var(--k);vertical-align:2px}
.keys{display:flex;align-self:end;gap:8px;margin:0 0 5px 18px;font-size:9px;line-height:15px;list-style:none}
.k1{--k:#8aaf77}.k2{--k:#e0b750}.k3{--k:#83cadb}.k4{--k:#e2884c}.k5{--k:#d2594c}.k6{--k:#3c77b9}.k7{--k:#ab4ba3}.k8{--k:#6f5f9f}.k9{--k:#588748}.k10{--k:#c8a53c}.k11{--k:#6ca659}.k12{--k:#3f72d6}.k13{--k:#ec7f37}.k14{--k:#9dd68e}.k15{--k:#f1b05c}.k16{--k:#8fb6f5}.k17{--k:#bf8fdc}.k18{--k:#ca414c}.k19{--k:#9457c6}

/* stat tiles */
.stats{display:grid;grid-auto-rows:minmax(0,1fr);gap:2px;min-width:0;min-height:0;flex:1}
.c1{grid-template-columns:1fr}.c2{grid-template-columns:repeat(2,1fr)}.c4{grid-template-columns:repeat(4,1fr)}.c5{grid-template-columns:repeat(5,1fr)}.c8{grid-template-columns:repeat(8,1fr)}
.stat{min-width:0;min-height:0;overflow:hidden;border:1px solid rgba(225,232,232,.7);border-radius:2px;color:#fff;background-clip:padding-box}
.stat p{position:relative;display:flex;flex-direction:column;padding:8px 9px 0;white-space:nowrap}
.stat b{font-weight:500}
.stat small{font-size:9px}
.green{background-image:linear-gradient(120deg,#81b976,#7aad5a)}
.blue{background-image:linear-gradient(120deg,#6581db,#5392d7)}
.orange{background-image:linear-gradient(120deg,#f4b057,#ee7038)}
.red{background-image:linear-gradient(120deg,#d96661,#cd4766)}
.yellow{background-image:linear-gradient(120deg,#f7f062,#ecaf3d)}
.yellow p{color:#202226}
.mid p{align-self:center;align-items:center;padding:0}
.vmid p{align-self:center;padding-top:0}
.mid p.line{flex-direction:row;justify-content:center}
.t8 p{font-size:8px;line-height:11px}.t8 b{font-size:10px;line-height:13px}
.t9 p{font-size:9px;line-height:13px}.t9 b{font-size:13px;line-height:14px}.t9 .sm{font-size:10px}
.t9 .line b{font-size:9px}.t9 small{font-size:11px}.t9 .line small{font-size:8px}
.t10 p{font-size:10px;line-height:13px}.t10 b{font-size:14px;line-height:15px}
.t11 p{font-size:11px;line-height:13px}.t11 b{font-size:10px;line-height:13px}.t11 small{font-size:8px}
.t12 p{font-size:12px;line-height:15px}.t12 b{font-size:23px;line-height:26px}.t12 small{font-size:14px}
.t18 p{font-size:11px;line-height:16px}.t18 b{font-size:18px;line-height:18px}.t18 small{font-size:14px}
.t20 p{font-size:12px;line-height:17px}.t20 b{font-size:20px;line-height:23px}.t20 small{font-size:12px}
.t25 p{font-size:11px;line-height:13px}.t25 b{font-size:25px;line-height:27px}
.t30 p{font-size:12px;line-height:14px}.t30 b{font-size:30px;line-height:36px}
.n13 p{font-size:13px;line-height:18px}.n23 p{font-size:23px;line-height:28px}.n27 p{font-size:27px;line-height:32px}.n28 p{font-size:28px;line-height:34px}.n60 p{font-size:60px;line-height:72px}.n94 p{font-size:94px;line-height:112px}
.nil{font-family:"DejaVu Sans",sans-serif;font-size:14px}
.n13 .nil{font-size:9px}
```
FILE: charts.js
```js
// Draws every <svg data-chart> from the plot table below.
let seed = 11;
const rnd = () => (seed = (seed * 16807) % 2147483647) / 2147483647;
const f1 = n => Math.round(n * 10) / 10;

// path fragments
const noise = (x1, x2, dx, y, a) => { let s = ''; for (let x = x1; x <= x2; x += dx) s += `L${f1(x)} ${f1(y + (rnd() * 2 - 1) * a)}`; return s + `L${x2} ${y}`; };
const steps = (x1, x2, dx, lo, hi, p = 0.5) => { let s = ''; for (let x = x1; x < x2; x += dx) s += `V${rnd() < p ? hi : f1(lo + rnd() * (hi - lo) * 0.4)}H${f1(Math.min(x + dx, x2))}`; return s; };
const dips = (x1, x2, y, list, w = 5) => `L${x1} ${y}` + list.split(' ').map(t => { const [x, d] = t.split(':').map(Number); return `L${x - w} ${y}L${x} ${y + d}L${x + w - 1} ${y}`; }).join('') + `L${x2} ${y}`;
const dashes = (x1, x2, y, a, fill = 0.6) => { let s = ''; for (let x = x1; x < x2; x += 7) if (rnd() < fill) s += `M${x} ${f1(y + (rnd() * 2 - 1) * a)}h6`; return s; };
const comb = (x1, x2, dx, y, a, base) => { let s = ''; for (let x = x1; x <= x2; x += dx) s += `M${f1(x)} ${base}V${f1(y + (rnd() * 2 - 1) * a)}`; return s; };
const spikes = (x1, x2, base, a, list) => { let s = `M${x1} ${base}`; const p = {}; list.split(' ').forEach(t => { const [x, h] = t.split(':').map(Number); p[x] = h; });
  const xs = Object.keys(p).map(Number); for (let x = x1; x < x2; x += 3) { const k = xs.find(v => v >= x && v < x + 3); s += k ? `L${k - 1} ${base}L${k} ${p[k]}L${k + 1} ${base}` : `L${x} ${f1(base - rnd() * a)}`; } return s + `L${x2} ${base}`; };
const slice = (cx, cy, rx, ry, a, b) => { const p = t => `${f1(cx + rx * Math.sin(t * Math.PI / 180))} ${f1(cy - ry * Math.cos(t * Math.PI / 180))}`; return `M${cx} ${cy}L${p(a)}A${rx} ${ry} 0 ${b - a > 180 ? 1 : 0} 1 ${p(b)}Z`; };
const pulses = (x1, x2, w, lo, hi) => { let s = ''; for (let x = x1; x < x2; x += w) s += `L${f1(x)} ${lo}L${f1(x + w * .2)} ${hi}H${f1(x + w * .5)}L${f1(x + w * .7)} ${lo}`; return s + `H${x2}`; };

const G = '#86b175', Y = '#e0b750', O = '#e2884c', B = '#3f76c8', LB = '#8fb6f5', OR = '#f1b05c', LG = '#9dd68e', DG = '#62a152';
const GF = 'rgba(134,177,117,.55)', W = 'rgba(255,255,255,.38)';
const P = {};
// id, box, y labels [x,y,dy,text], x labels [y,x,dx,start,minutes,count], horizontal lines, vertical lines, marks
const plot = (id, box, yl, xl, hg, vg, marks = []) => { P[id] = { box, yl, xl, hg, vg, marks }; };
const tile = (id, box, line, paths) => plot(id, box, 0, 0, 0, 0, paths.map(d => ['a', W, d, box[1] + box[3], line]));
const DIP = '298:18 322:18 347:18 372:18 409:30 452:35 482:17 495:17 533:17 545:17';

tile('al1', [412, 259, 284, 83], '', ['M412 301H491', 'M507 301H696']);
tile('al2', [699, 259, 283, 83], '', ['M699 324H780', 'M793 324H982']);
tile('cm11', [412, 352, 184, 157], '#c3efb2', ['M412 444H425L428 508H475L479 426L482 447' + noise(484, 596, 5, 446, 2)]);
tile('lg11', [1187, 352, 184, 157], '#c3efb2', [spikes(1187, 1371, 508, 5, '1205:425 1253:500 1262:497 1270:500 1291:436 1300:498 1317:480 1328:470 1340:495 1352:499 1364:500')]);
tile('cm14', [12, 44, 376, 157], '#c3efb2', ['M12 118H47L49 200H152L154 126H157V97H160V115L166 122L171 128L176 120' + noise(180, 388, 5, 121, 2)]);
tile('bk14', [12, 211, 184, 114], '#ffe08a', ['M12 311H28V322H78L81 261' + noise(84, 195, 6, 261, 1)]);
tile('rb14', [206, 211, 182, 114], '#c3efb2', [spikes(206, 388, 323, 4, '224:287 236:315 268:314 290:316 318:316 351:295 356:292 361:257 374:278 382:315')]);
tile('pc14', [206, 335, 182, 115], '#ffe08a', ['M206 441H222V449H272L274 411L388 410']);
tile('sz14', [12, 460, 184, 115], '#b7d3f8', ['M12 528H67', 'M77 526L110 520L150 514L196 507']);
tile('ix14', [206, 460, 182, 115], '#c3efb2', [spikes(206, 388, 574, 1, '209:536 218:542 285:540 306:556 311:556 332:556 352:542 360:530 365:520 370:545 377:506 386:522')]);
tile('hr14', [206, 585, 182, 114], '#ffe08a', ['M206 626H262', 'M273 626' + noise(276, 388, 6, 626, 1)]);
tile('ss24', [136, 987, 184, 114], '#c3efb2', ['M136 1087H144L146 1099H195L198 1038' + noise(201, 320, 6, 1036, 1)]);
tile('cm24', [330, 987, 184, 114], '#c3efb2', ['M330 1048H338L340 1100H389L391 1035L395 1052' + noise(398, 514, 5, 1050, 2)]);
tile('rb24', [523, 987, 183, 114], '#c3efb2', [spikes(523, 706, 1100, 5, '530:1062 541:1090 560:1094 600:1094 657:1080 662:1072 668:1030 672:1078 683:1056 695:1093')]);
tile('wr24', [717, 987, 184, 114], '#c3efb2', ['M717 1091H726V1100H775L778 1030L781 1088H803L805 1052L808 1088H819V1066H829V1088H833L836 1052L839 1088H850L853 1055L856 1088H865L868 1052L871 1088H880L883 1054L886 1088H893L896 1054L901 1060']);
tile('ix24', [1296, 987, 119, 114], '#c3efb2', [spikes(1296, 1415, 1100, 1, '1299:1070 1305:1076 1342:1070 1356:1084 1373:1086 1386:1070 1391:1052 1396:1076 1400:1034 1408:1062')]);
tile('cx24', [1426, 987, 117, 114], '#ffe08a', ['M1426 1092H1434V1099H1462L1465 1063L1543 1062']);
tile('nx23', [787, 1064, 150, 139], '#c3efb2', ['M787 1185H802V1182H823', 'M831 1181H848V1174H860V1166H873V1158H885V1150H898V1142H909V1133H922V1125H934V1117H937']);

const top52 = steps(305, 505, 5, 910, 912) + steps(505, 567, 5, 905, 909) + steps(567, 626, 5, 902, 905);
const bk = (id, fill, line) => plot(id, [15, 828, 766, 324], [45, 911, 38.9, '50|40|30|20|10|0'], [1128, 95, 94.2, '16:10', 10, 6], [52, 626, '952 1029 1106'], [878, 1116, '95 189 284 378 472 566'],
  [['a', fill, 'M62 1068H145', 1106, line], ['a', fill, 'M154 1103H164', 1106, ''], ['a', fill, 'M178 1103H210', 1106, line], ['l', line, 'M145 1106H178M210 1106H266M300 1106V1103H305V910'], ['a', fill, 'M305 910' + top52, 1106, line]]);
bk('bk1', 'rgba(134,177,117,.3)>rgba(160,180,115,.42)', G);
bk('bk2', 'rgba(144,186,130,.55)>rgba(160,180,115,.65)', '');

plot('cm22', [15, 1204, 766, 367], [52, 1273, 54.3, '250|200|150|100|50|0'], 0, [60, 763, '1329 1382 1437 1491'], [1253, 1571, '111 226 342 400 457 572 748'], [
  ['a', 'rgba(143,182,245,.16)>rgba(143,182,245,.04)', 'M69 1347L80 1341L85 1350H90L96 1355L105 1342H155L160 1353H170L174 1344H180L186 1360L200 1375L210 1387L222 1401L235 1422L248 1435L255 1452H270L290 1478L300 1492L320 1515L335 1535L342 1545H375L385 1530L405 1505L420 1487L432 1476L445 1462L457 1445L465 1436H472L490 1408L500 1392L515 1372L535 1347L550 1344L560 1362L568 1367L572 1347H630L640 1353H650L658 1349H720L726 1365L735 1350L763 1345', 1545, LB],
  ['l', OR, 'M69 1339H86V1360L93 1366V1385H98L100 1354H137L140 1376H150L157 1340H178L183 1365L190 1385L198 1408L203 1470L212 1478L215 1506L221 1518L228 1544H373L378 1520L386 1475L392 1440L398 1410L410 1385L421 1350L430 1340L436 1349H446L452 1372L456 1346H468L474 1370H479L482 1347H522L528 1361L532 1347H551L556 1366L563 1388L566 1410H570L573 1348H604L606 1385L609 1402L618 1362L622 1347H633L636 1371H650L655 1349H695L700 1360L704 1348L763 1343', 1.6],
  ['l', LG, 'M69 1334h6M76 1343h30M115 1333h8M120 1338h12M135 1337h32M165 1347h8M170 1340h10M178 1540h6M184 1544h190M380 1286h6M375 1359h6M386 1352h6M391 1345h9M403 1361h6' + dashes(408, 760, 1343, 5), 2]]);
plot('rb22', [791, 1204, 766, 367], [839, 1278, 44.4, '0.600|0.500|0.400|0.300|0.200|0.100|0'], 0, [846, 1537, '1279 1367 1412 1456 1500'], [1253, 1571, '953 1011 1125 1182 1296 1352 1522'], [
  ['l', '#cb4453', 'M1475 1279h7M964 1397h7M1470 1353h6M1526 1368h6M1014 1500h7M998 1515h7M1452 1426h6M1440 1441h7M1446 1500h7M1458 1515h13M1480 1487h6M862 1529h34' + dashes(900, 1215, 1529, 0) + 'M1218 1529h225' + dashes(1490, 1530, 1529, 0) + dashes(857, 1537, 1545, 0, .55), 2],
  ['l', '#e8c548', 'M966 1532L1020 1534L1110 1532L1127 1540L1300 1539L1440 1537L1450 1527L1470 1520L1480 1510H1530'],
  ['l', '#ef8a3c', 'M857 1539H963L966 1524H1000L1015 1520L1018 1532H1055L1070 1539L1140 1544H1190L1210 1538H1440L1448 1532L1455 1515L1465 1500L1473 1475L1478 1453L1487 1450L1496 1455L1505 1475L1520 1482L1526 1505L1537 1522', 1.6]]);

plot('ck23', [11, 921, 765, 282], [40, 968, 62.7, '15|10|5|0'], [1179, 68, 58.35, '16:15', 5, 12], [47, 758, '970 1032'], [970, 1166, '67 126 184 418 476 534 593 651'], [['f', GF, 'M57 1158V1020H106V1007H165V996H223V1158ZM316 1158V1145H374V1132H432V1120H491V1107H514V1158ZM523 1158V1107H550V1095H608V1083H667V1070H725V1058H757V1158Z']]);
plot('ls23', [11, 1214, 765, 281], [71, 1269, 59.6, '600000|400000|200000|0'], [1471, 98, 55.8, '16:15', 5, 12], [78, 758, '1271 1389'], [1262, 1458, '97 154 209 265 432 600'], [['f', GF, 'M88 1449V1423H90V1405H95V1419H101V1421H106V1448H112V1449ZM146 1449V1447H157V1449ZM297 1449V1280H301V1404H306V1420H322V1423H342V1338H346V1361H352V1415H357V1419H402V1363H408V1418H424V1421H452V1336H458V1365H486V1420H492V1423H508V1337H514V1365H520V1416H526V1420H569V1360H576V1417H592V1420H619V1337H625V1364H631V1421H675V1337H681V1365H687V1418H703V1421H731V1347H737V1356H743V1415H748V1420H757V1449Z']]);
plot('sw23', [787, 1214, 573, 281], [850, 1278, 43, '0 ms|-100 ms|-200 ms|-300 ms'], [1447, 914, 78.8, '16:20', 10, 6], [857, 1340, '1322 1365 1408'], [1262, 1430, '914 1072 1229'], [
  ['a', 'rgba(224,183,80,.06)', 'M869 1278L870 1392H904L905 1321H940L942 1290H976L978 1278H1054L1056 1393' + noise(1059, 1088, 4, 1395, 4) + 'L1091 1278L1094 1398' + noise(1097, 1128, 5, 1402, 3) + 'L1131 1278H1139L1141 1396H1167L1169 1278H1172L1174 1393' + noise(1177, 1207, 5, 1396, 9) + 'L1210 1278L1213 1397' + noise(1216, 1246, 5, 1395, 4) + 'L1250 1278L1253 1394H1286L1288 1278L1291 1392H1327L1329 1278L1332 1391H1340', 1278, Y],
  ['l', DG, 'M869 1277H1340']]);

const scan = (id, box, yl, xl, hg, vg, g, o) => plot(id, box, yl, xl, hg, vg, [['f', 'rgba(144,186,130,.5)', g], ['f', '#dca463', o]]);
scan('ts14', [398, 44, 633, 240], [460, 128, 55, '400 qps|200 qps|0 qps'], [260, 564, 89.3, '16:20', 10, 6], [467, 1013, '128 183 238'], [93, 250, '564 654 743 832 921 1011'],
  'M477 238V133L485 132L490 135H515L520 137L525 135L529 238ZM676 238L683 130L685 107L688 130L692 142' + noise(696, 1008, 6, 139, 4) + 'L1011 137V238Z',
  'M477 238V186H524L528 238ZM676 238L683 190L685 173L688 187' + noise(692, 1008, 6, 188, 2) + 'L1011 187V238Z');
scan('ts42', [792, 1115, 766, 240], [855, 1199, 54.7, '400 qps|200 qps|0 qps'], [1331, 874, 55.6, '16:20', 5, 12], [861, 1537, '1199 1254'], [1164, 1320, '874 985 1096 1207 1318 1429'],
  'M1012 1309L1018 1215L1024 1180L1029 1210' + noise(1034, 1530, 6, 1209, 4) + 'L1536 1208V1309Z', 'M1012 1309L1018 1262L1024 1244L1029 1258' + noise(1034, 1530, 6, 1260, 2) + 'L1536 1259V1309Z');
plot('qq14', [1041, 44, 506, 240], [1104, 99, 34.6, '200 qps|150 qps|100 qps|50 qps|0 qps'], [260, 1187, 67.9, '16:20', 10, 6], [1110, 1527, '204 238'], [93, 250, '1255 1390'], [['f', '#d6bfc6', 'M1281 238V112L1287 109L1292 120L1296 110' + noise(1300, 1522, 5, 112, 3) + 'L1527 111V238Z']]);

plot('xid', [22, 46, 764, 490], [90, 94, 36, '1100000|1000000|900000|800000|700000|600000|500000|400000|300000|200000|100000|0'], [513, 147, 67.8, '16:20', 10, 6], [97, 514, '131 203 275 418 491'], [96, 501, '147 215 282 350 418'], [
  ['a', 'rgba(224,208,140,.3)', 'M108 303L113 298H230' + noise(235, 505, 6, 0, 0).replace(/L([\d.]+) 0/g, (m, x) => `L${x} ${f1(298 - (x - 230) * .59 + rnd() * 2)}`) + 'L513 131', 491, Y],
  ['f', '#e4e0d8', 'M203 298L210 365L225 491H270V298Z'],
  ['f', 'rgba(190,200,208,.75)', 'M108 325H112V305H145V298H203L210 365L225 491H108ZM270 491L272 281H303V260H342V241H370V221H411V203H438V182H472V161H505V142H513V491Z'],
  ['l', '#6f5f9f', 'M108 325H112V305H145V298H272V281H303V260H342V241H370V221H411V203H438V182H472V161H505V142H513', 1.3],
  ['l', B, 'M203 298L210 365L225 491M270 491L272 281M108 491H513']]);
plot('au31', [796, 46, 765, 240], [844, 94, 36.5, '100%|75%|50%|25%|0%'], [262, 910, 82.9, '16:20', 10, 6], [852, 1358, '241'], [96, 251, '910 993 1075 1158 1241 1324']);
plot('ae31', [796, 296, 765, 240], [854, 353, 45.6, '5 week|3 week|2 week|0 s'], [513, 919, 81.5, '16:20', 10, 6], [860, 1360, '354 400 491'], [346, 501, '919 1000 1244 1326']);
plot('bf31', [22, 588, 764, 283], [87, 636, 38.3, '1.20 MB|1 MB|800 kB'], 0, [93, 578, '637'], [637, 860, '151 229 309 388 546'], [['f', 'rgba(108,166,89,.5)', 'M104 860V672L113 671L115 690L119 705L122 728L125 745V860ZM250 860L268 740L280 690L285 657' + dips(290, 577, 664, '304:20 320:24 335:22 362:22 377:42 408:46 428:20 445:20 457:20 470:22') + 'V860Z']]);
plot('ba31', [796, 588, 765, 283], [861, 653, 35.3, '1.20 MB|1 MB|800 kB'], 0, [868, 1541, '654 689 724'], [637, 860, '887 975 1054 1165 1276 1442'], [['f', 'rgba(236,130,138,.42)', 'M879 860V679L890 680L893 692L900 712L904 745V860ZM1090 860L1110 740L1130 669' + dips(1135, 1541, 671, '1157:22 1179:24 1200:20 1228:22 1261:40 1304:42 1333:20 1350:22 1368:20 1392:20') + 'V860Z']]);

plot('ir41', [21, 838, 765, 281], [58, 893, 39, '400|300|200|100|0'], [1071, 77, 57.7, '16:20', 5, 12], [65, 768, '894 932 1010'], [887, 1060, '135 192 308 365 481 538 654'], [['a', 'rgba(120,175,105,.55)>rgba(120,175,105,0)', 'M75 1049H218L221 1030L226 1012L240 975L268 910L273 903' + dips(278, 766, 906, DIP), 1049, B, 1.5]]);
plot('sr41', [796, 838, 765, 281], [833, 885, 40.9, '100|75|50|25|0'], [1071, 852, 57.7, '16:20', 5, 12], [840, 1543, '887 927 968 1009'], [887, 1060, '852 1025 1140 1198 1371 1487'], [['l', '#e8834a', 'M850 1049H1541', 1.6]]);
plot('rm41', [21, 1171, 765, 281], [61, 1226, 52, '60 K|40 K|20 K|0'], [1405, 136, 57.3, '16:25', 5, 12], [67, 768, '1279 1330'], [1219, 1393, '136 193 595 652 710 767'], [['f', 'rgba(190,130,215,.75)>rgba(140,105,205,.8)', 'M220 1383L222 1367L226 1352L268 1250L273 1237' + dips(278, 766, 1241, DIP) + 'V1383Z']]);
plot('in41', [796, 1171, 765, 281], [833, 1218, 41, '100|75|50|25|0'], [1405, 908, 57.7, '16:25', 5, 12], 0, [1219, 1393, '966 1081 1312 1427 1542'], [['l', B, 'M850 1382H1542', 1.2]]);
plot('up41', [21, 1463, 765, 281], [58, 1518, 39, '200|150'], 0, [65, 768, '1519'], [1512, 1740, '132 248 365 481 597'], [['a', 'rgba(140,185,125,.6)', 'M230 1600L262 1550L268 1532L273 1528' + dips(278, 766, 1532, DIP), 1740, '#9a6bc0']]);
plot('de41', [796, 1463, 765, 281], [833, 1510, 41, '100|75'], 0, [840, 1543, '1511 1553'], [1511, 1740, '1542']);

plot('pie1', [792, 11, 766, 283], 0, 0, 0, 0, [['p', '@#e0b274>#d9845c', slice(1051, 168, 103, 98, 0, 281)], ['p', '#f2f9fd>#ddf0fa', slice(1051, 168, 103, 98, 281, 342)]]);
plot('pie2', [792, 304, 766, 283], 0, 0, 0, 0, [['#b86abf>#c07bb8', 0, 49], ['#d63424>#ec5723', 49, 97], ['#f2f9fd>#ddf0fa', 97, 147], ['#a6c596>#a5bd88', 147, 195], ['#ecb88a>#e58a61', 195, 244], ['#e2ab78>#d9825a', 244, 293], ['#7cb2d3>#8aaad8', 293, 343]].map(([c, a, b]) => ['p', c, slice(1051, 461, 103, 98, a, b)]));
plot('qc32', [15, 597, 766, 283], [92, 653, 44.7, '200 ops/s|150 ops/s|100 ops/s'], 0, [97, 460, '653 699'], [645, 870, '137 313'], [['l', '#cdbdd8', 'M218 670L222 672L227 684L230 672' + noise(234, 310, 5, 668, 3) + 'L315 682L319 668L324 670L329 684L333 669' + noise(338, 459, 5, 668, 3)]]);
plot('rt32', [792, 597, 766, 283], [851, 657, 35, '250 ms|200 ms|150 ms|100 ms'], 0, [858, 1271, '693'], [645, 870, '900 968 1034 1101 1168 1234'], [['l', '#74adc4', 'M993 674L999 684L1004 667L1008 683' + noise(1012, 1098, 5, 682, 3) + 'L1103 669L1107 682L1120 682L1124 669L1128 683' + noise(1132, 1270, 5, 683, 2.5), 1.3], ['l', '#8fb97f', 'M1268 745V726M1244 745V738']]);
const tr = (id, vg) => plot(id, [16, 1408, 766, 283], [54, 1463, 38.7, '400|300|200'], 0, [61, 763, '1463 1502'], [1456, 1690, vg], [['f', '#6a84d8>#7cb8e4', 'M170 1690L210 1600L235 1552L246 1525L263 1480L268 1473' + dips(278, 763, 1477, '295:18 318:18 345:17 368:17 404:30 447:33 479:17 492:17 527:17 539:17') + 'V1690Z']]);
tr('tr42', '131 188 246 361 592 707'); tr('rr42', '131 188 361 418 592 707');

plot('bw33', [9, 85, 766, 282], [38, 147, 34.8, '50|40|30|20|10|0'], [344, 69, 94, '16:20', 10, 6], [44, 620, '147 217 252'], [135, 332, '69 163 257 351 445 539'], [
  ['f', '#eaa874', 'M59 321V319H89V321ZM182 321V319H187V321Z'],
  ['f', 'rgba(238,195,125,.8)>rgba(225,105,90,.8)', 'M187 321V153' + steps(187, 619, 4.5, 166, 153, .72) + 'V321Z'],
  ['f', 'rgba(222,100,65,.65)', 'M187 321' + steps(187, 215, 4.5, 303, 318, .3) + steps(215, 450, 4.5, 316, 319, .8) + steps(450, 619, 4.5, 302, 314, .4) + 'V321Z'],
  ['l', '#55606b', 'M180 135V321M55 266H619', 1, '3 2']]);
plot('ml33', [786, 85, 766, 282], [852, 139, 60.8, '50 min|33.3 min|16.7 min|0 s'], [344, 879, 61.8, '16:20', 10, 6], [859, 1240, '200 261'], [135, 332, '941 1064'], [
  ['l', G, 'M952 322L975 310L1000 297L1018 285L1074 252L1110 230L1165 203L1240 156'],
  ['l', O, 'M872 322L880 316L893 312L895 322M1138 216L1141 298L1150 298L1160 301L1165 300L1210 274L1237 257L1238 160'],
  ['l', '#cf5648', [975, 979, 1016, 1023, 1030, 1072, 1079, 1108, 1115, 1121, 1130, 1144, 1150, 1164, 1170, 1180, 1215, 1226].map(x => `M${x} 322L${x + 2} ${f1(322 - (x - 952) * .575)}L${x + 4} 322`).join('')],
  ['l', B, 'M872 322H932M952 322H1240', 1.3]]);
plot('qq43', [11, 1238, 766, 283], [87, 1294, 45, '200 ops/s|150 ops/s|100 ops/s|50 ops/s|0 ops/s'], [1497, 128, 58.7, '16:20', 10, 6], [93, 455, '1385 1430'], [1287, 1487, '245 362'], [['f', '#dfcbd8', 'M211 1475V1316L216 1310L219 1326L223 1311' + noise(227, 452, 5, 1311, 3) + 'L455 1310V1475Z']]);
plot('rt43', [787, 1238, 768, 283], [847, 1300, 34.8, '250 ms|200 ms|150 ms|100 ms|50 ms|0 s'], [1497, 892, 66.8, '16:20', 10, 6], [853, 1266, '1301 1336'], [1288, 1487, '1025 1092 1159'], [
  ['l', '#74adc4', 'M985 1317L991 1326L995 1308L999 1326' + noise(1003, 1090, 5, 1324, 3) + 'L1095 1312L1099 1324L1112 1324L1116 1311L1120 1325' + noise(1124, 1263, 5, 1324, 2.5), 1.4],
  ['l', '#f4d6d6', 'M985 1444' + noise(988, 1263, 4, 1444, 2), 2],
  ['l', '#9fc08e', 'M1125 1467H1138L1142 1403L1147 1467L1152 1403L1156 1466H1232L1236 1380L1240 1467H1255L1259 1366L1262 1467'],
  ['l', '#5f94cf', 'M985 1467' + noise(990, 1006, 5, 1467, 2) + 'L1011 1381L1015 1467H1035V1470L1073 1470L1077 1446H1090L1092 1470H1140'],
  ['l', '#e0b54c', 'M1025 1472L1030 1468L1090 1467L1092 1454L1096 1468H1140', 1.3],
  ['l', '#26406e', 'M985 1472' + noise(990, 1115, 6, 1471, 3) + 'L1119 1461L1122 1472' + noise(1128, 1263, 6, 1473, 2)],
  ['l', '#5d8b3e', 'M985 1475H1263', 2]]);

plot('qp34', [1, 80, 768, 409], [56, 168, 56.8, '0.0300|0.0200|0.0100|0'], [360, 120, 56.5, '16:20', 5, 12], [63, 751, '169 226 282'], [129, 348, '176 289 402 458 571 684'], [
  ['l', LG, dashes(289, 320, 150, 0, .5) + 'M325 150h48' + dashes(380, 425, 150, 0, .5) + dashes(458, 507, 150, 0) + dashes(547, 748, 150, 0, .55) + dashes(283, 325, 339, 0, .9) + dashes(372, 748, 339, 0, .9), 1.6],
  ['a', 'rgba(143,182,245,.12)>rgba(143,182,245,.01)', 'M273 339H283L290 330L300 326L310 321L318 316L330 309L340 309L350 300L360 297L370 289L382 291L390 285L400 284L410 272L422 266H440L446 275L452 272L458 276L466 266L490 266L505 272L515 274L530 264L545 261L570 260L578 265L595 255L610 259L618 254L625 259L640 256L650 262L664 262L672 255L682 260L695 262H749', 339, LB],
  ['l', OR, 'M278 339L284 319L288 314L291 316L294 298L298 293L302 298L308 296L312 277H318L323 254L328 256L330 272H333L336 254H354L357 245L360 254H371L373 275H377L379 255H383L386 276L416 276L419 254H428L432 276H440L444 297H447L450 278H455L458 297H461L465 276L468 297H472L476 276L487 276L489 255H492L496 234H501L504 255H511L514 276L518 255L521 276H528L532 234H535L538 255H543L546 234H549L553 255H557L560 234L563 234L566 255L573 255' + pulses(578, 749, 12.2, 276, 254), 1.6]]);
plot('rt34', [781, 80, 768, 409], [831, 136, 40.5, '12.5 s|10 s|7.50 s|5 s|2.50 s|0 s'], [360, 895, 56.8, '16:20', 5, 12], [838, 1531, '177 218 298'], [129, 348, '1008 1236 1293 1406 1463 1520'], [
  ['a', 'rgba(143,182,245,.2)>rgba(143,182,245,.02)', 'M1060 172L1088 170L1090 165H1112V162H1120L1122 193H1137V214H1154L1156 230H1170L1173 241H1182L1184 250H1193L1195 259H1221L1226 267L1232 275L1238 288L1250 290L1253 306H1261L1265 321H1272L1276 336L1310 335L1345 333H1440L1490 334L1530 333', 339, LB],
  ['l', '#bf8fdc', 'M1060 171H1085L1088 165L1100 163L1120 161L1122 205H1137L1139 249H1148L1150 280L1155 292H1160L1162 337H1235L1300 334L1352 333L1354 327H1368L1385 326H1404L1406 337H1482L1485 332L1530 332', 2],
  ['l', OR, 'M1060 171H1085L1088 165L1100 163L1115 160L1120 163L1122 205H1137L1139 249H1148L1150 282L1155 294H1160L1162 337H1260L1310 335L1352 334L1354 327H1368L1378 329L1385 326H1404L1406 337H1482L1485 333L1530 333', 1.4]]);
plot('qd34', [1, 499, 768, 200], 0, [675, 69, 60.9, '16:20', 5, 12], 0, [540, 665, '68 190 312 373 495 617 739'], [['a', 'rgba(108,166,89,.32)', 'M252 637L259 642L265 631L275 638L285 634L294 635L300 626L304 625L308 619L312 629L316 629L320 609L324 613L326 622H330L332 602L335 601L337 553H339L343 620H358L362 633L370 636L375 628L381 640L390 633L400 631L412 627L415 632L420 626L426 625L428 620H466L472 608L477 621L483 611L490 619L497 628L502 620L510 627L516 620L520 632H541L546 645L550 636L560 638L578 632L587 631L590 639L597 631L610 632L614 637L618 631H700L704 638L708 631H749L751 637', 654, DG]]);
plot('rd34', [781, 499, 768, 200], 0, [675, 848, 60.9, '16:20', 5, 12], 0, [540, 665, '909 1031 1091 1213 1335 1457']);

plot('ld44', [2, 828, 506, 199], 0, [1003, 44, 62.4, '06:00', 120, 6], 0, [869, 993, '44 106 169'], [['f', 'rgba(134,177,117,.55)', 'M354 869H396V982H354Z']]);
plot('tl44', [2, 1037, 506, 240], [50, 1098, 33.2, '1|0.750|0.500|0.250|0'], [1253, 76, 65, '06:00', 360, 2], [57, 198, '1099 1132 1164 1199'], [1087, 1243, '76 141'], [['a', 'rgba(134,177,117,.22)', 'M182 1099H198', 1231, G]]);
plot('lb44', [519, 1037, 892, 240], [578, 1094, 45.5, '1.50 kB|1 kB|500 B|0 B'], [1253, 622, 74.8, '06:00', 120, 6], [585, 1045, '1141 1186'], [1087, 1243, '771 846 921'], [
  ['l', Y, 'M990 1232H1015M991 1232V1186M993 1232V1165M997 1232V1196M1000 1232V1186M1004 1232V1186M1006 1232V1172', 1.4],
  ['l', G, 'M1016 1232V1140L1018 1102L1020 1232M1022 1232V1173M1024 1232V1186M1027 1232V1195M1031 1232V1180M1034 1232V1190M1036 1232V1178M1039 1232V1186M1042 1232V1226M1016 1232H1044', 1.5]]);
plot('l244', [2, 1330, 766, 283], [62, 1391, 36.5, '1.50 kB|1.25 kB|1 kB|750 B|500 B'], 0, [67, 749, '1392 1428 1465'], [1378, 1600, '119 175 231 453 509 565'], [
  ['l', Y, 'M671 1600V1537M673 1600V1506M683 1600V1535M687 1600V1537M690 1600V1516M692 1600V1540', 1.4],
  ['l', G, 'M708 1600L709 1450L711 1404L713 1600M716 1600V1515M720 1600V1525M724 1600V1540M731 1600V1530M735 1600V1523M739 1600V1526M743 1600V1545', 1.5]]);
plot('s244', [778, 1330, 764, 283], [836, 1397, 42.5, '100 ms|80 ms|60 ms|40 ms'], 0, [843, 1522, '1398'], [1378, 1600, '893 949 1005 1228 1284 1340'], [['l', Y, 'M1455 1600V1398', 1.5]]);

// charts of the last row use a taller unit on the y axis
plot('tc51', [25, 185, 765, 856], [61, 318, 81, '250|200|150|100|50|0'], [771, 109, 57.7, '16:25', 5, 12], [68, 772, '320 482 563 725'], [289, 748, '224 340 398 455 628'], [
  ['a', 'rgba(143,182,245,.16)>rgba(143,182,245,.02)', 'M78 575L80 586H94L110 620L125 650L142 690H150L165 722H195L200 712L215 690L235 652L250 625L265 598H275L285 560H297L310 520L330 485L350 450L362 425H378L395 460L397 430H456L460 440H475L478 428H545L550 455L566 428H625L630 432L640 426L772 424', 725, LB],
  ['l', OR, 'M78 723H199L203 690L207 640L213 606L219 576L225 545L231 515L237 487L243 455L250 422L258 420L262 428H275L279 466L283 430H298L301 465L305 430L350 427L353 448L358 427H377L380 460L387 490L393 522L399 430H430L434 510L440 480L445 450L450 428H457L461 465H474L478 432L524 430L527 448L530 426L640 423L772 424', 1.6],
  ['l', LG, 'M78 723h75M200 446h6M205 338h7M211 435h6M218 425h8M228 451h6M234 422h11' + dashes(250, 768, 424, 7) + 'M194 722h7', 2]]);
const roll = (lo, hi, p) => `M868 ${lo}` + pulses(870, 940, 14.5, lo, hi) + `M982 ${hi}L988 ${lo}L994 ${hi}H1002L1005 ${lo}H1012L1017 ${hi}H1026L1030 ${lo}H1035L1039 ${hi}L1045 ${lo}L1050 ${hi}H1099L1103 ${lo}L1112 ${hi}L1120 ${lo}H1123L1127 ${hi}L1133 ${lo}H1144L1150 ${hi}H1184L1188 ${lo}L1194 ${hi}L1199 ${lo}L1205 ${hi}L1210 ${lo}L1215 ${hi}L1221 ${lo}L1226 ${hi}H1268L1270 ${p(.23)}H1274L1277 ${p(.1)}H1280L1283 ${p(.265)}H1286L1289 ${p(.065)}H1297L1299 ${p(.43)}H1303L1305 ${p(.6)}H1307L1311 ${p(.13)}H1314L1317 ${lo}` + pulses(1318, 1350, 16, lo, hi) + `H1354L1356 ${p(.4)}H1360L1363 ${lo}` + pulses(1366, 1546, 20, lo, hi);
const t51 = roll(725, 703, v => f1(725 - v * 665)), r51 = roll(1381, 1370, v => f1(1381 - v * 332));
plot('tr51', [802, 185, 765, 856], [849, 326, 132, '0.600|0.400|0.200|0'], [771, 896, 56.8, '16:25', 5, 12], [857, 1548, '725'], [289, 748, '896 953 1066 1123 1237 1294 1351 1464'], [['l', OR, t51, 1.4], ['l', LB, t51, 1.4, '6 3']]);
plot('td51', [25, 1061, 765, 416], 0, [1427, 75, 60.7, '16:25', 5, 12], 0, [1145, 1405, '196 257 500 560'], [['a', 'rgba(108,166,89,.32)', 'M44 1380H235L240 1373H258L263 1350L272 1352L280 1360L290 1367L305 1369L325 1365L345 1358L355 1345L362 1332L367 1195L371 1190L374 1167L377 1183L381 1185L386 1374H418L425 1377H440L448 1374H478L482 1327L500 1328L507 1342L520 1337L533 1335L538 1322L545 1328L552 1338L562 1335L569 1310L574 1327L580 1314H587L592 1328H600L604 1308L610 1295L615 1278H630L635 1228L639 1250H642L646 1328L662 1329L665 1340L690 1338L698 1340L702 1350L712 1327L722 1319L728 1322L732 1334L755 1335L759 1330L762 1278L770 1272', 1381, DG]]);
plot('rb51', [802, 1061, 765, 416], [849, 1213, 83, '0.500|0.250|0'], [1427, 896, 56.8, '16:25', 5, 12], [857, 1548, '1216 1299'], [1163, 1405, '896 953 1066 1123 1237 1294 1351 1464'], [['l', '#cf5058', r51]]);

plot('tc52', [15, 43, 767, 505], [53, 222, 114, '200|100|0'], [498, 136, 86.6, '16:30', 10, 6], [60, 590, '225 453'], [147, 475, '136 222 309 396 482 569'], [
  ['l', G, 'M69 451H124'], ['a', 'rgba(134,177,117,.35)', 'M158 451L161 258H164L166 180H168L170 248L175 242H180L183 260H186L188 240' + noise(192, 308, 6, 242, 4) + 'L313 260L317 240L337 242L340 260L344 240' + noise(350, 586, 6, 242, 4), 453, G], ['l', '#83cadb', 'M69 453H124M158 453H589', 1.3]]);
let sage = 'M925 453L928 197L930 197L932 402L936 181H938L941 375L945 176L948 176L950 388L955 395H960L963 199L966 350L970 193L973 193L976 370L980 192H986L989 228L992 360L996 385H1002L1006 402L1009 318L1013 264L1016 264L1018 388L1022 215L1025 384L1030 223L1034 223L1036 390L1040 233L1043 233L1045 386L1048 224L1050 224L1053 390L1056 405H1068L1071 375L1073 248L1076 248L1079 394L1083 262L1087 390L1092 267L1096 363L1100 251L1104 370L1110 372L1113 413L1117 269H1123L1126 372L1131 372L1135 270L1139 388L1144 314L1148 422L1152 291L1156 388L1161 413';
for (let x = 1165, i = 0; x < 1350; x += 4.3, i++) sage += `L${f1(x)} ${f1(i % 2 ? 370 + rnd() * 45 : 295 + rnd() * (x - 1130) * .25)}`;
plot('sg52', [792, 43, 767, 505], [823, 145, 76.5, '4 s|3 s|2 s|1 s|0 s'], [498, 906, 86, '16:30', 10, 6], [830, 1357, '147 223 300 377'], [147, 475, '1164 1250'], [['l', G, sage + 'L1352 348L1355 390'], ['l', Y, 'M841 453H892M920 453H1356', 1.3]]);
plot('lc52', [15, 656, 767, 416], [53, 863, 111, '200|0'], [1023, 100, 57.8, '16:25', 5, 12], [60, 763, '977'], [759, 1000, '157 215 331 389 446 619 735'], [['l', G, comb(187, 762, 3.06, 791, 7, 976), 1.3]]);
plot('lk52', [792, 656, 767, 1037], [829, 757, 78.6, '250|225|200|175|150|125|100|75|50|25|0'], 0, [836, 1540, '759 917 1155 1233 1312 1391'], [759, 1690, '876 1050 1165 1280 1454'], [['f', '#fff', 'M963 860H1538V1548H963Z'], ['l', '#4a7acb', comb(964, 1537, 3.06, 860, 14, 1548), 1.4]]);
plot('lt52', [15, 1094, 767, 600], [53, 1193, 122.7, '250|200|150'], 0, [60, 190, '1440'], [1197, 1690, '156 214 271 446 560 676'], [['l', '#4a7acb', comb(192, 762, 3.06, 1272, 10, 1690), 1.4]]);

plot('rl53', [9, 68, 1540, 852], [86, 239, 88.3, '35A4E900|2FAF0800|29B92700|23C34600|1DCD6500|17D78400|11E1A300'], [870, 174, 97.3, '06:00', 60, 12], [93, 1271, '332 419 685 773'], [172, 848, '174 271 466 660 855 1049 1243'], [
  ['a', 'rgba(134,177,117,.2)', 'M1133 765H1136L1137 742L1142 720L1146 700L1151 670L1154 655L1159 648L1161 628L1167 606L1170 586H1192', 826, '#a3519f'],
  ['a', 'rgba(134,177,117,.2)', 'M1197 586V570L1204 545L1207 525L1211 515L1215 490L1220 478L1224 450L1229 430L1232 408L1237 395L1240 370L1246 350L1249 330L1254 315L1257 295L1261 280L1263 260L1268 248L1270 235', 826, B]]);
plot('cl53', [9, 941, 1540, 773], [86, 1101, 75.6, '35A4E900|2FAF0800|29B92700|23C34600|1DCD6500|17D78400'], 0, [93, 1283, '1180 1331'], [1045, 1690, '175 371 567 764 960 1058'], [
  ['a', 'rgba(241,176,92,.22)', 'M1143 1550L1155 1490L1163 1460L1172 1430L1180 1397H1203', 1690, OR], ['a', 'rgba(241,176,92,.22)', 'M1208 1397L1213 1370L1222 1340L1230 1300L1238 1270L1246 1240L1254 1205L1262 1170L1270 1140L1276 1115L1282 1096', 1690, OR],
  ['l', DG, 'M1148 1550V1529H1156V1497H1164V1467H1173V1434H1181V1400H1188V1398H1203M1208 1398H1220V1349H1227V1317H1236V1283H1243V1252H1253V1218H1259V1185H1267V1153H1276V1119H1282', 1.3]]);

const isc = (id, hg) => {
  const sh = (y0, y1, list, k) => `M64 719H149L152 ${719 - 47 * k}L155 ${719 - 99 * k}L168 ${719 - 209 * k}L187 ${y0}L190 ${y0 + 2}` + dips(192, 546, y1, list, 3);
  const l = '206:50 223:48 240:56 256:53 282:88 313:98 335:50 343:52 369:53 377:53', h = l.replace(/:(\d+)/g, (m, d) => ':' + Math.round(d / 2));
  plot(id, [9, 137, 764, 678], [47, 260, 114.3, '400|300|200|100|0'], [764, 132, 80.4, '16:30', 10, 6], [54, 547, hg], [241, 742, '292 373 453'], [['a', 'rgba(134,177,117,.1)', sh(290, 300, l, 1), 719, G], ['a', 'rgba(235,180,110,.28)', sh(504, 511, h, .5), 719, O, 1.3]]);
};
isc('is54', '377 491'); isc('it54', '263 605 719');
const sq = (id, hg, m) => plot(id, [783, 137, 764, 678], [819, 237, 96, '100|80|60|40|20|0'], [764, 898, 72.2, '16:30', 10, 6], [826, 1271, hg], [241, 742, '1042 1115 1187 1259'], m);
sq('ss54', '624', []); sq('st54', '431 623', [['l', O, 'M837 719H1270', 1.6]]);

// rendering
let gid = 0;
function paint(c, defs) {
  if (!c.includes('>')) return c;
  const radial = c[0] === '@', [a, b] = c.replace('@', '').split('>'), id = 'g' + (++gid);
  const stops = `<stop offset="0" stop-color="${a}"/><stop offset="1" stop-color="${b}"/>`;
  defs.push(radial ? `<radialGradient id="${id}">${stops}</radialGradient>` : `<linearGradient id="${id}" x1="0" y1="0" x2="0" y2="1">${stops}</linearGradient>`);
  return `url(#${id})`;
}
const line = (c, d, w = 1, dash = '') => c ? `<path d="${d}" fill="none" stroke="${c}" stroke-width="${w}" stroke-dasharray="${dash}" stroke-linejoin="round" vector-effect="non-scaling-stroke"/>` : '';
function mark(m, defs) {
  const [t, c, d] = m;
  if (t === 'l') return line(c, d, m[3], m[4]);
  if (t === 'f') return `<path d="${d}" fill="${paint(c, defs)}"/>`;
  if (t === 'p') return `<path d="${d}" fill="${paint(c, defs)}" stroke="#fff" stroke-width="1"/>`;
  const x0 = d.match(/^M([\d.]+)/)[1];
  return `<path d="${d}V${m[3]}H${x0}Z" fill="${paint(c, defs)}"/>` + line(m[4], d, m[5]);
}
document.querySelectorAll('svg[data-chart]').forEach(el => {
  const p = P[el.dataset.chart], [bx, by, bw, bh] = p.box, defs = [];
  const px = x => f1((x - bx) / bw * 100) + '%', py = y => f1((y - by) / bh * 100) + '%';
  let grid = '', text = '';
  if (p.hg) p.hg[2].split(' ').forEach(y => grid += `M${p.hg[0]} ${y}H${p.hg[1]}`);
  if (p.vg) p.vg[2].split(' ').forEach(x => grid += `M${x} ${p.vg[0]}V${p.vg[1]}`);
  if (p.yl) p.yl[3].split('|').forEach((t, i) => text += `<text text-anchor="end" x="${px(p.yl[0])}" y="${py(p.yl[1] + i * p.yl[2])}">${t}</text>`);
  if (p.xl) {
    const [y, x, dx, start, min, n] = p.xl, [h, m] = start.split(':').map(Number);
    for (let i = 0; i < n; i++) {
      const t = h * 60 + m + i * min, s = String(Math.floor(t / 60)).padStart(2, '0') + ':' + String(t % 60).padStart(2, '0');
      text += `<text text-anchor="middle" x="${px(x + i * dx)}" y="${py(y)}">${s}</text>`;
    }
  }
  const body = p.marks.map(m => mark(m, defs)).join('');
  el.innerHTML = `<svg viewBox="${p.box.join(' ')}" preserveAspectRatio="none" width="100%" height="100%"><defs>${defs.join('')}</defs>${line('#dfe1e5', grid || 'M0 0')}${body}</svg>${text}`;
});
```
